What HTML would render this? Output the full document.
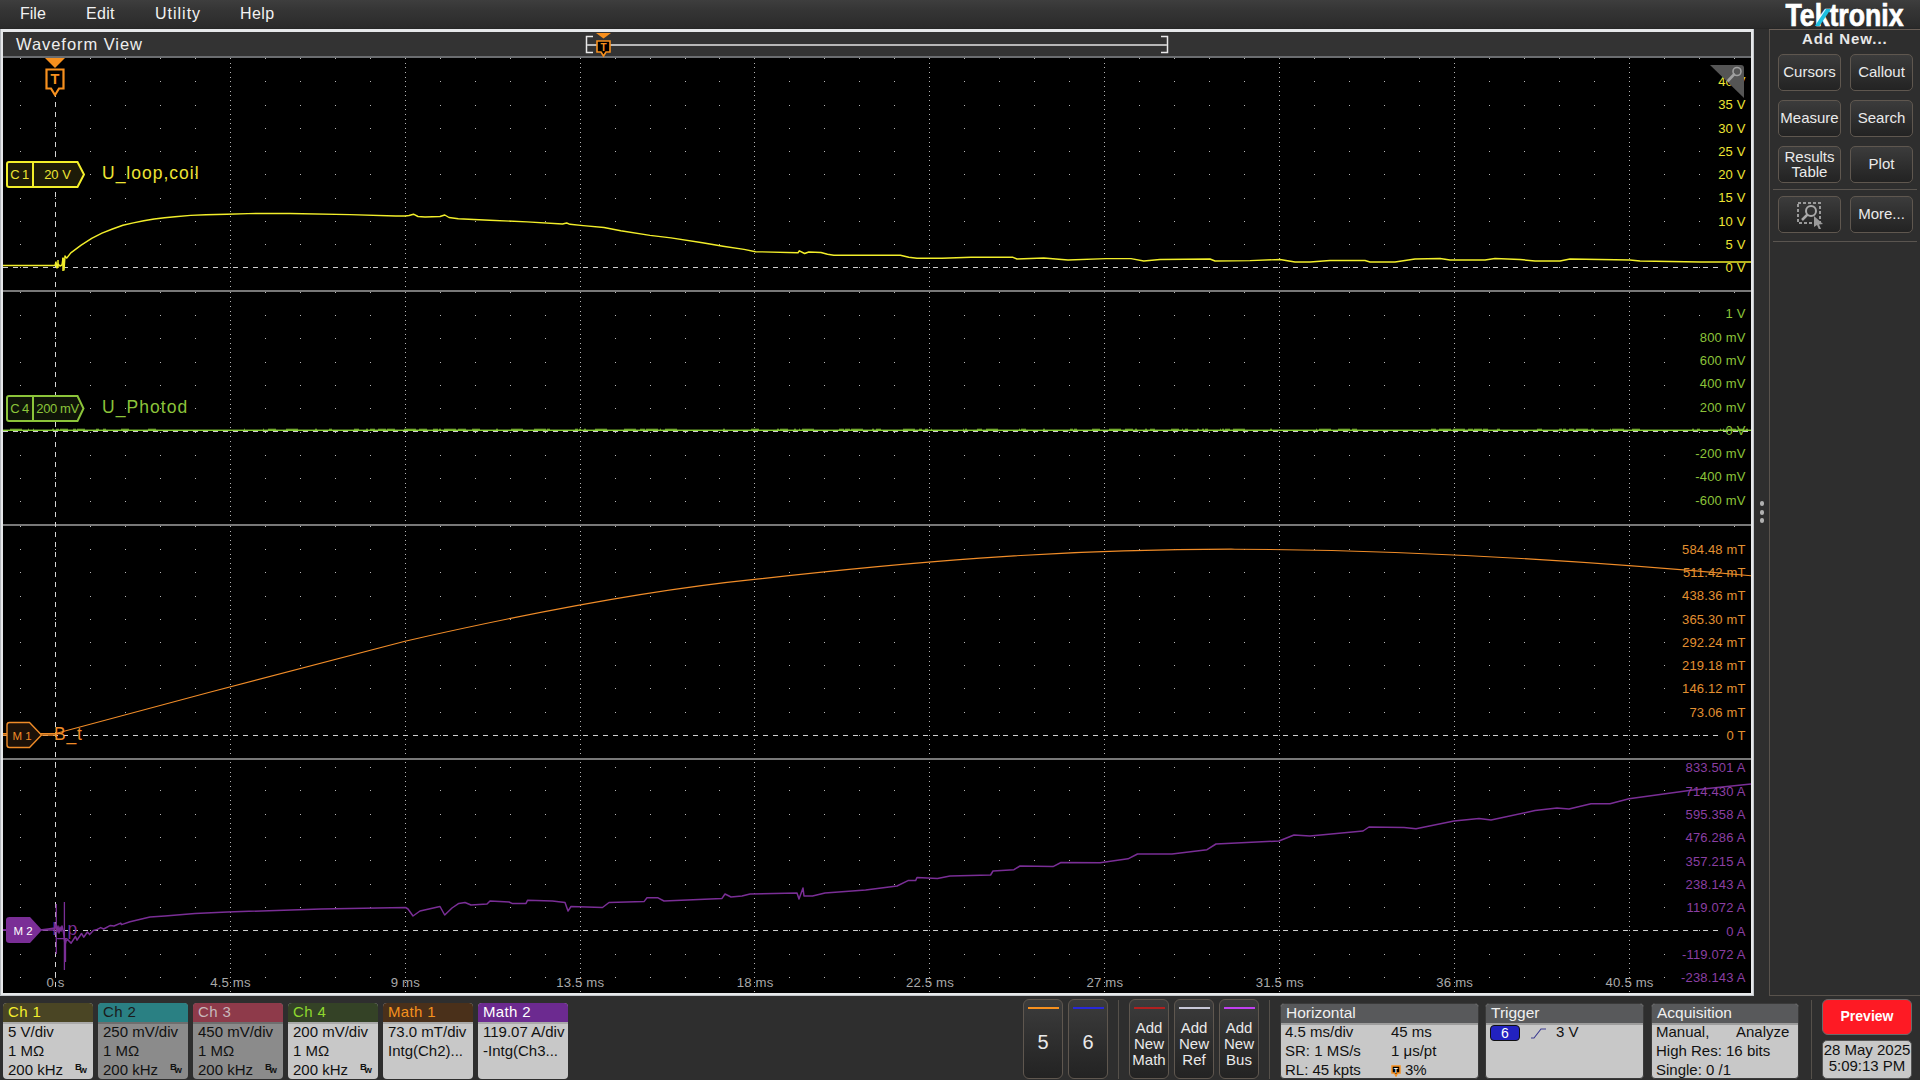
<!DOCTYPE html><html><head><meta charset="utf-8"><title>Tektronix</title><style>
html,body{margin:0;padding:0}
body{width:1920px;height:1080px;background:#2e2e2e;position:relative;overflow:hidden;font-family:"Liberation Sans",sans-serif;color:#eee}
.a{position:absolute}
.t{position:absolute;white-space:nowrap;line-height:1}
svg text{font-family:"Liberation Sans",sans-serif}
.btn{position:absolute;box-sizing:border-box;border:1px solid #5f574f;border-radius:5px;background:linear-gradient(#3c3c3c,#2a2a2a 70%,#232323);color:#eaeaea;text-align:center}
.box{position:absolute;box-sizing:border-box;border-radius:4px;overflow:hidden;background:#c8c8c8}
.box .h{position:absolute;left:0;top:0;right:0;height:18.5px;border-bottom:2px solid #a9a9a9}

</style></head><body>
<div class="a" style="left:0;top:0;width:1920px;height:29px;background:linear-gradient(#3e3e3e,#353535 35%,#2f2f2f 70%,#2a2a2a 96%,#242424)"></div>
<div class="t" style="left:20px;top:6px;font-size:16px;letter-spacing:0px;color:#f2f2f2">File</div>
<div class="t" style="left:86px;top:6px;font-size:16px;letter-spacing:0.3px;color:#f2f2f2">Edit</div>
<div class="t" style="left:155px;top:6px;font-size:16px;letter-spacing:1px;color:#f2f2f2">Utility</div>
<div class="t" style="left:240px;top:6px;font-size:16px;letter-spacing:0.4px;color:#f2f2f2">Help</div>
<div class="a" style="left:0;top:29px;width:1754px;height:967px;background:#e6e8ea"></div>
<div class="a" style="left:0;top:29px;width:1px;height:967px;background:#b4b8bc"></div>
<div class="a" style="left:1753px;top:29px;width:1px;height:967px;background:#c4c8cc"></div>
<div class="a" style="left:0;top:995px;width:1754px;height:1px;background:#c4c8cc"></div>
<div class="a" style="left:3px;top:32px;width:1748px;height:24px;background:#333333"></div>
<div class="a" style="left:3px;top:56px;width:1748px;height:2px;background:#6b6d70"></div>
<div class="t" style="left:16px;top:36px;font-size:16.5px;letter-spacing:0.95px;color:#eeeeee">Waveform View</div>
<div class="a" style="left:3px;top:58px;width:1748px;height:935px;background:#000"></div>
<svg class="a" style="left:0;top:0" width="1920" height="1080" viewBox="0 0 1920 1080">
<path d="M593 36.5H586.5V52.5H593" fill="none" stroke="#e8e8e8" stroke-width="1.5"/>
<path d="M1161 36.5H1167.5V52.5H1161" fill="none" stroke="#e8e8e8" stroke-width="1.5"/>
<rect x="587" y="44" width="580" height="2" fill="#b8b8b8"/>
<path d="M596 33H611L603.5 38.5Z" fill="#f7901e"/>
<path d="M597 41H610V52H606L603.5 56L601 52H597Z" fill="#000" stroke="#f7901e" stroke-width="1.6"/>
<text x="603.5" y="51" font-size="10" font-weight="bold" fill="#f7901e" text-anchor="middle">T</text>
<rect x="3" y="290" width="1748" height="2" fill="#787878"/>
<rect x="3" y="524" width="1748" height="2" fill="#787878"/>
<rect x="3" y="758" width="1748" height="2" fill="#787878"/>
<path d="M20 58h1v1h-1zM20 81h1v1h-1zM20 105h1v1h-1zM20 128h1v1h-1zM20 151h1v1h-1zM20 174h1v1h-1zM20 198h1v1h-1zM20 221h1v1h-1zM20 244h1v1h-1zM20 267h1v1h-1zM20 292h1v1h-1zM20 315h1v1h-1zM20 338h1v1h-1zM20 362h1v1h-1zM20 385h1v1h-1zM20 408h1v1h-1zM20 432h1v1h-1zM20 455h1v1h-1zM20 478h1v1h-1zM20 501h1v1h-1zM20 526h1v1h-1zM20 549h1v1h-1zM20 572h1v1h-1zM20 596h1v1h-1zM20 619h1v1h-1zM20 642h1v1h-1zM20 665h1v1h-1zM20 688h1v1h-1zM20 712h1v1h-1zM20 735h1v1h-1zM20 767h1v1h-1zM20 790h1v1h-1zM20 814h1v1h-1zM20 837h1v1h-1zM20 860h1v1h-1zM20 884h1v1h-1zM20 907h1v1h-1zM20 930h1v1h-1zM20 954h1v1h-1zM20 977h1v1h-1zM55 58h1v1h-1zM55 81h1v1h-1zM55 105h1v1h-1zM55 128h1v1h-1zM55 151h1v1h-1zM55 174h1v1h-1zM55 198h1v1h-1zM55 221h1v1h-1zM55 244h1v1h-1zM55 267h1v1h-1zM55 292h1v1h-1zM55 315h1v1h-1zM55 338h1v1h-1zM55 362h1v1h-1zM55 385h1v1h-1zM55 408h1v1h-1zM55 432h1v1h-1zM55 455h1v1h-1zM55 478h1v1h-1zM55 501h1v1h-1zM55 526h1v1h-1zM55 549h1v1h-1zM55 572h1v1h-1zM55 596h1v1h-1zM55 619h1v1h-1zM55 642h1v1h-1zM55 665h1v1h-1zM55 688h1v1h-1zM55 712h1v1h-1zM55 735h1v1h-1zM55 767h1v1h-1zM55 790h1v1h-1zM55 814h1v1h-1zM55 837h1v1h-1zM55 860h1v1h-1zM55 884h1v1h-1zM55 907h1v1h-1zM55 930h1v1h-1zM55 954h1v1h-1zM55 977h1v1h-1zM90 58h1v1h-1zM90 81h1v1h-1zM90 105h1v1h-1zM90 128h1v1h-1zM90 151h1v1h-1zM90 174h1v1h-1zM90 198h1v1h-1zM90 221h1v1h-1zM90 244h1v1h-1zM90 267h1v1h-1zM90 292h1v1h-1zM90 315h1v1h-1zM90 338h1v1h-1zM90 362h1v1h-1zM90 385h1v1h-1zM90 408h1v1h-1zM90 432h1v1h-1zM90 455h1v1h-1zM90 478h1v1h-1zM90 501h1v1h-1zM90 526h1v1h-1zM90 549h1v1h-1zM90 572h1v1h-1zM90 596h1v1h-1zM90 619h1v1h-1zM90 642h1v1h-1zM90 665h1v1h-1zM90 688h1v1h-1zM90 712h1v1h-1zM90 735h1v1h-1zM90 767h1v1h-1zM90 790h1v1h-1zM90 814h1v1h-1zM90 837h1v1h-1zM90 860h1v1h-1zM90 884h1v1h-1zM90 907h1v1h-1zM90 930h1v1h-1zM90 954h1v1h-1zM90 977h1v1h-1zM125 58h1v1h-1zM125 81h1v1h-1zM125 105h1v1h-1zM125 128h1v1h-1zM125 151h1v1h-1zM125 174h1v1h-1zM125 198h1v1h-1zM125 221h1v1h-1zM125 244h1v1h-1zM125 267h1v1h-1zM125 292h1v1h-1zM125 315h1v1h-1zM125 338h1v1h-1zM125 362h1v1h-1zM125 385h1v1h-1zM125 408h1v1h-1zM125 432h1v1h-1zM125 455h1v1h-1zM125 478h1v1h-1zM125 501h1v1h-1zM125 526h1v1h-1zM125 549h1v1h-1zM125 572h1v1h-1zM125 596h1v1h-1zM125 619h1v1h-1zM125 642h1v1h-1zM125 665h1v1h-1zM125 688h1v1h-1zM125 712h1v1h-1zM125 735h1v1h-1zM125 767h1v1h-1zM125 790h1v1h-1zM125 814h1v1h-1zM125 837h1v1h-1zM125 860h1v1h-1zM125 884h1v1h-1zM125 907h1v1h-1zM125 930h1v1h-1zM125 954h1v1h-1zM125 977h1v1h-1zM160 58h1v1h-1zM160 81h1v1h-1zM160 105h1v1h-1zM160 128h1v1h-1zM160 151h1v1h-1zM160 174h1v1h-1zM160 198h1v1h-1zM160 221h1v1h-1zM160 244h1v1h-1zM160 267h1v1h-1zM160 292h1v1h-1zM160 315h1v1h-1zM160 338h1v1h-1zM160 362h1v1h-1zM160 385h1v1h-1zM160 408h1v1h-1zM160 432h1v1h-1zM160 455h1v1h-1zM160 478h1v1h-1zM160 501h1v1h-1zM160 526h1v1h-1zM160 549h1v1h-1zM160 572h1v1h-1zM160 596h1v1h-1zM160 619h1v1h-1zM160 642h1v1h-1zM160 665h1v1h-1zM160 688h1v1h-1zM160 712h1v1h-1zM160 735h1v1h-1zM160 767h1v1h-1zM160 790h1v1h-1zM160 814h1v1h-1zM160 837h1v1h-1zM160 860h1v1h-1zM160 884h1v1h-1zM160 907h1v1h-1zM160 930h1v1h-1zM160 954h1v1h-1zM160 977h1v1h-1zM195 58h1v1h-1zM195 81h1v1h-1zM195 105h1v1h-1zM195 128h1v1h-1zM195 151h1v1h-1zM195 174h1v1h-1zM195 198h1v1h-1zM195 221h1v1h-1zM195 244h1v1h-1zM195 267h1v1h-1zM195 292h1v1h-1zM195 315h1v1h-1zM195 338h1v1h-1zM195 362h1v1h-1zM195 385h1v1h-1zM195 408h1v1h-1zM195 432h1v1h-1zM195 455h1v1h-1zM195 478h1v1h-1zM195 501h1v1h-1zM195 526h1v1h-1zM195 549h1v1h-1zM195 572h1v1h-1zM195 596h1v1h-1zM195 619h1v1h-1zM195 642h1v1h-1zM195 665h1v1h-1zM195 688h1v1h-1zM195 712h1v1h-1zM195 735h1v1h-1zM195 767h1v1h-1zM195 790h1v1h-1zM195 814h1v1h-1zM195 837h1v1h-1zM195 860h1v1h-1zM195 884h1v1h-1zM195 907h1v1h-1zM195 930h1v1h-1zM195 954h1v1h-1zM195 977h1v1h-1zM230 58h1v1h-1zM230 63h1v1h-1zM230 67h1v1h-1zM230 72h1v1h-1zM230 77h1v1h-1zM230 81h1v1h-1zM230 86h1v1h-1zM230 91h1v1h-1zM230 95h1v1h-1zM230 100h1v1h-1zM230 105h1v1h-1zM230 109h1v1h-1zM230 114h1v1h-1zM230 119h1v1h-1zM230 123h1v1h-1zM230 128h1v1h-1zM230 132h1v1h-1zM230 137h1v1h-1zM230 142h1v1h-1zM230 146h1v1h-1zM230 151h1v1h-1zM230 156h1v1h-1zM230 160h1v1h-1zM230 165h1v1h-1zM230 170h1v1h-1zM230 174h1v1h-1zM230 179h1v1h-1zM230 184h1v1h-1zM230 188h1v1h-1zM230 193h1v1h-1zM230 198h1v1h-1zM230 202h1v1h-1zM230 207h1v1h-1zM230 211h1v1h-1zM230 216h1v1h-1zM230 221h1v1h-1zM230 225h1v1h-1zM230 230h1v1h-1zM230 235h1v1h-1zM230 239h1v1h-1zM230 244h1v1h-1zM230 249h1v1h-1zM230 253h1v1h-1zM230 258h1v1h-1zM230 263h1v1h-1zM230 267h1v1h-1zM230 272h1v1h-1zM230 277h1v1h-1zM230 281h1v1h-1zM230 286h1v1h-1zM230 292h1v1h-1zM230 297h1v1h-1zM230 301h1v1h-1zM230 306h1v1h-1zM230 311h1v1h-1zM230 315h1v1h-1zM230 320h1v1h-1zM230 324h1v1h-1zM230 329h1v1h-1zM230 334h1v1h-1zM230 338h1v1h-1zM230 343h1v1h-1zM230 348h1v1h-1zM230 352h1v1h-1zM230 357h1v1h-1zM230 362h1v1h-1zM230 366h1v1h-1zM230 371h1v1h-1zM230 376h1v1h-1zM230 380h1v1h-1zM230 385h1v1h-1zM230 390h1v1h-1zM230 394h1v1h-1zM230 399h1v1h-1zM230 404h1v1h-1zM230 408h1v1h-1zM230 413h1v1h-1zM230 418h1v1h-1zM230 422h1v1h-1zM230 427h1v1h-1zM230 432h1v1h-1zM230 436h1v1h-1zM230 441h1v1h-1zM230 446h1v1h-1zM230 450h1v1h-1zM230 455h1v1h-1zM230 459h1v1h-1zM230 464h1v1h-1zM230 469h1v1h-1zM230 473h1v1h-1zM230 478h1v1h-1zM230 483h1v1h-1zM230 487h1v1h-1zM230 492h1v1h-1zM230 497h1v1h-1zM230 501h1v1h-1zM230 506h1v1h-1zM230 511h1v1h-1zM230 515h1v1h-1zM230 520h1v1h-1zM230 526h1v1h-1zM230 531h1v1h-1zM230 535h1v1h-1zM230 540h1v1h-1zM230 544h1v1h-1zM230 549h1v1h-1zM230 554h1v1h-1zM230 558h1v1h-1zM230 563h1v1h-1zM230 568h1v1h-1zM230 572h1v1h-1zM230 577h1v1h-1zM230 582h1v1h-1zM230 586h1v1h-1zM230 591h1v1h-1zM230 596h1v1h-1zM230 600h1v1h-1zM230 605h1v1h-1zM230 609h1v1h-1zM230 614h1v1h-1zM230 619h1v1h-1zM230 623h1v1h-1zM230 628h1v1h-1zM230 633h1v1h-1zM230 637h1v1h-1zM230 642h1v1h-1zM230 647h1v1h-1zM230 651h1v1h-1zM230 656h1v1h-1zM230 661h1v1h-1zM230 665h1v1h-1zM230 670h1v1h-1zM230 674h1v1h-1zM230 679h1v1h-1zM230 684h1v1h-1zM230 688h1v1h-1zM230 693h1v1h-1zM230 698h1v1h-1zM230 702h1v1h-1zM230 707h1v1h-1zM230 712h1v1h-1zM230 716h1v1h-1zM230 721h1v1h-1zM230 726h1v1h-1zM230 730h1v1h-1zM230 735h1v1h-1zM230 739h1v1h-1zM230 744h1v1h-1zM230 749h1v1h-1zM230 753h1v1h-1zM230 762h1v1h-1zM230 767h1v1h-1zM230 772h1v1h-1zM230 776h1v1h-1zM230 781h1v1h-1zM230 786h1v1h-1zM230 790h1v1h-1zM230 795h1v1h-1zM230 800h1v1h-1zM230 804h1v1h-1zM230 809h1v1h-1zM230 814h1v1h-1zM230 818h1v1h-1zM230 823h1v1h-1zM230 828h1v1h-1zM230 832h1v1h-1zM230 837h1v1h-1zM230 842h1v1h-1zM230 846h1v1h-1zM230 851h1v1h-1zM230 856h1v1h-1zM230 860h1v1h-1zM230 865h1v1h-1zM230 870h1v1h-1zM230 874h1v1h-1zM230 879h1v1h-1zM230 884h1v1h-1zM230 888h1v1h-1zM230 893h1v1h-1zM230 898h1v1h-1zM230 902h1v1h-1zM230 907h1v1h-1zM230 912h1v1h-1zM230 916h1v1h-1zM230 921h1v1h-1zM230 926h1v1h-1zM230 930h1v1h-1zM230 935h1v1h-1zM230 940h1v1h-1zM230 944h1v1h-1zM230 949h1v1h-1zM230 954h1v1h-1zM230 958h1v1h-1zM230 963h1v1h-1zM230 968h1v1h-1zM230 972h1v1h-1zM230 977h1v1h-1zM230 982h1v1h-1zM230 986h1v1h-1zM230 991h1v1h-1zM265 58h1v1h-1zM265 81h1v1h-1zM265 105h1v1h-1zM265 128h1v1h-1zM265 151h1v1h-1zM265 174h1v1h-1zM265 198h1v1h-1zM265 221h1v1h-1zM265 244h1v1h-1zM265 267h1v1h-1zM265 292h1v1h-1zM265 315h1v1h-1zM265 338h1v1h-1zM265 362h1v1h-1zM265 385h1v1h-1zM265 408h1v1h-1zM265 432h1v1h-1zM265 455h1v1h-1zM265 478h1v1h-1zM265 501h1v1h-1zM265 526h1v1h-1zM265 549h1v1h-1zM265 572h1v1h-1zM265 596h1v1h-1zM265 619h1v1h-1zM265 642h1v1h-1zM265 665h1v1h-1zM265 688h1v1h-1zM265 712h1v1h-1zM265 735h1v1h-1zM265 767h1v1h-1zM265 790h1v1h-1zM265 814h1v1h-1zM265 837h1v1h-1zM265 860h1v1h-1zM265 884h1v1h-1zM265 907h1v1h-1zM265 930h1v1h-1zM265 954h1v1h-1zM265 977h1v1h-1zM300 58h1v1h-1zM300 81h1v1h-1zM300 105h1v1h-1zM300 128h1v1h-1zM300 151h1v1h-1zM300 174h1v1h-1zM300 198h1v1h-1zM300 221h1v1h-1zM300 244h1v1h-1zM300 267h1v1h-1zM300 292h1v1h-1zM300 315h1v1h-1zM300 338h1v1h-1zM300 362h1v1h-1zM300 385h1v1h-1zM300 408h1v1h-1zM300 432h1v1h-1zM300 455h1v1h-1zM300 478h1v1h-1zM300 501h1v1h-1zM300 526h1v1h-1zM300 549h1v1h-1zM300 572h1v1h-1zM300 596h1v1h-1zM300 619h1v1h-1zM300 642h1v1h-1zM300 665h1v1h-1zM300 688h1v1h-1zM300 712h1v1h-1zM300 735h1v1h-1zM300 767h1v1h-1zM300 790h1v1h-1zM300 814h1v1h-1zM300 837h1v1h-1zM300 860h1v1h-1zM300 884h1v1h-1zM300 907h1v1h-1zM300 930h1v1h-1zM300 954h1v1h-1zM300 977h1v1h-1zM335 58h1v1h-1zM335 81h1v1h-1zM335 105h1v1h-1zM335 128h1v1h-1zM335 151h1v1h-1zM335 174h1v1h-1zM335 198h1v1h-1zM335 221h1v1h-1zM335 244h1v1h-1zM335 267h1v1h-1zM335 292h1v1h-1zM335 315h1v1h-1zM335 338h1v1h-1zM335 362h1v1h-1zM335 385h1v1h-1zM335 408h1v1h-1zM335 432h1v1h-1zM335 455h1v1h-1zM335 478h1v1h-1zM335 501h1v1h-1zM335 526h1v1h-1zM335 549h1v1h-1zM335 572h1v1h-1zM335 596h1v1h-1zM335 619h1v1h-1zM335 642h1v1h-1zM335 665h1v1h-1zM335 688h1v1h-1zM335 712h1v1h-1zM335 735h1v1h-1zM335 767h1v1h-1zM335 790h1v1h-1zM335 814h1v1h-1zM335 837h1v1h-1zM335 860h1v1h-1zM335 884h1v1h-1zM335 907h1v1h-1zM335 930h1v1h-1zM335 954h1v1h-1zM335 977h1v1h-1zM370 58h1v1h-1zM370 81h1v1h-1zM370 105h1v1h-1zM370 128h1v1h-1zM370 151h1v1h-1zM370 174h1v1h-1zM370 198h1v1h-1zM370 221h1v1h-1zM370 244h1v1h-1zM370 267h1v1h-1zM370 292h1v1h-1zM370 315h1v1h-1zM370 338h1v1h-1zM370 362h1v1h-1zM370 385h1v1h-1zM370 408h1v1h-1zM370 432h1v1h-1zM370 455h1v1h-1zM370 478h1v1h-1zM370 501h1v1h-1zM370 526h1v1h-1zM370 549h1v1h-1zM370 572h1v1h-1zM370 596h1v1h-1zM370 619h1v1h-1zM370 642h1v1h-1zM370 665h1v1h-1zM370 688h1v1h-1zM370 712h1v1h-1zM370 735h1v1h-1zM370 767h1v1h-1zM370 790h1v1h-1zM370 814h1v1h-1zM370 837h1v1h-1zM370 860h1v1h-1zM370 884h1v1h-1zM370 907h1v1h-1zM370 930h1v1h-1zM370 954h1v1h-1zM370 977h1v1h-1zM405 58h1v1h-1zM405 63h1v1h-1zM405 67h1v1h-1zM405 72h1v1h-1zM405 77h1v1h-1zM405 81h1v1h-1zM405 86h1v1h-1zM405 91h1v1h-1zM405 95h1v1h-1zM405 100h1v1h-1zM405 105h1v1h-1zM405 109h1v1h-1zM405 114h1v1h-1zM405 119h1v1h-1zM405 123h1v1h-1zM405 128h1v1h-1zM405 132h1v1h-1zM405 137h1v1h-1zM405 142h1v1h-1zM405 146h1v1h-1zM405 151h1v1h-1zM405 156h1v1h-1zM405 160h1v1h-1zM405 165h1v1h-1zM405 170h1v1h-1zM405 174h1v1h-1zM405 179h1v1h-1zM405 184h1v1h-1zM405 188h1v1h-1zM405 193h1v1h-1zM405 198h1v1h-1zM405 202h1v1h-1zM405 207h1v1h-1zM405 211h1v1h-1zM405 216h1v1h-1zM405 221h1v1h-1zM405 225h1v1h-1zM405 230h1v1h-1zM405 235h1v1h-1zM405 239h1v1h-1zM405 244h1v1h-1zM405 249h1v1h-1zM405 253h1v1h-1zM405 258h1v1h-1zM405 263h1v1h-1zM405 267h1v1h-1zM405 272h1v1h-1zM405 277h1v1h-1zM405 281h1v1h-1zM405 286h1v1h-1zM405 292h1v1h-1zM405 297h1v1h-1zM405 301h1v1h-1zM405 306h1v1h-1zM405 311h1v1h-1zM405 315h1v1h-1zM405 320h1v1h-1zM405 324h1v1h-1zM405 329h1v1h-1zM405 334h1v1h-1zM405 338h1v1h-1zM405 343h1v1h-1zM405 348h1v1h-1zM405 352h1v1h-1zM405 357h1v1h-1zM405 362h1v1h-1zM405 366h1v1h-1zM405 371h1v1h-1zM405 376h1v1h-1zM405 380h1v1h-1zM405 385h1v1h-1zM405 390h1v1h-1zM405 394h1v1h-1zM405 399h1v1h-1zM405 404h1v1h-1zM405 408h1v1h-1zM405 413h1v1h-1zM405 418h1v1h-1zM405 422h1v1h-1zM405 427h1v1h-1zM405 432h1v1h-1zM405 436h1v1h-1zM405 441h1v1h-1zM405 446h1v1h-1zM405 450h1v1h-1zM405 455h1v1h-1zM405 459h1v1h-1zM405 464h1v1h-1zM405 469h1v1h-1zM405 473h1v1h-1zM405 478h1v1h-1zM405 483h1v1h-1zM405 487h1v1h-1zM405 492h1v1h-1zM405 497h1v1h-1zM405 501h1v1h-1zM405 506h1v1h-1zM405 511h1v1h-1zM405 515h1v1h-1zM405 520h1v1h-1zM405 526h1v1h-1zM405 531h1v1h-1zM405 535h1v1h-1zM405 540h1v1h-1zM405 544h1v1h-1zM405 549h1v1h-1zM405 554h1v1h-1zM405 558h1v1h-1zM405 563h1v1h-1zM405 568h1v1h-1zM405 572h1v1h-1zM405 577h1v1h-1zM405 582h1v1h-1zM405 586h1v1h-1zM405 591h1v1h-1zM405 596h1v1h-1zM405 600h1v1h-1zM405 605h1v1h-1zM405 609h1v1h-1zM405 614h1v1h-1zM405 619h1v1h-1zM405 623h1v1h-1zM405 628h1v1h-1zM405 633h1v1h-1zM405 637h1v1h-1zM405 642h1v1h-1zM405 647h1v1h-1zM405 651h1v1h-1zM405 656h1v1h-1zM405 661h1v1h-1zM405 665h1v1h-1zM405 670h1v1h-1zM405 674h1v1h-1zM405 679h1v1h-1zM405 684h1v1h-1zM405 688h1v1h-1zM405 693h1v1h-1zM405 698h1v1h-1zM405 702h1v1h-1zM405 707h1v1h-1zM405 712h1v1h-1zM405 716h1v1h-1zM405 721h1v1h-1zM405 726h1v1h-1zM405 730h1v1h-1zM405 735h1v1h-1zM405 739h1v1h-1zM405 744h1v1h-1zM405 749h1v1h-1zM405 753h1v1h-1zM405 762h1v1h-1zM405 767h1v1h-1zM405 772h1v1h-1zM405 776h1v1h-1zM405 781h1v1h-1zM405 786h1v1h-1zM405 790h1v1h-1zM405 795h1v1h-1zM405 800h1v1h-1zM405 804h1v1h-1zM405 809h1v1h-1zM405 814h1v1h-1zM405 818h1v1h-1zM405 823h1v1h-1zM405 828h1v1h-1zM405 832h1v1h-1zM405 837h1v1h-1zM405 842h1v1h-1zM405 846h1v1h-1zM405 851h1v1h-1zM405 856h1v1h-1zM405 860h1v1h-1zM405 865h1v1h-1zM405 870h1v1h-1zM405 874h1v1h-1zM405 879h1v1h-1zM405 884h1v1h-1zM405 888h1v1h-1zM405 893h1v1h-1zM405 898h1v1h-1zM405 902h1v1h-1zM405 907h1v1h-1zM405 912h1v1h-1zM405 916h1v1h-1zM405 921h1v1h-1zM405 926h1v1h-1zM405 930h1v1h-1zM405 935h1v1h-1zM405 940h1v1h-1zM405 944h1v1h-1zM405 949h1v1h-1zM405 954h1v1h-1zM405 958h1v1h-1zM405 963h1v1h-1zM405 968h1v1h-1zM405 972h1v1h-1zM405 977h1v1h-1zM405 982h1v1h-1zM405 986h1v1h-1zM405 991h1v1h-1zM440 58h1v1h-1zM440 81h1v1h-1zM440 105h1v1h-1zM440 128h1v1h-1zM440 151h1v1h-1zM440 174h1v1h-1zM440 198h1v1h-1zM440 221h1v1h-1zM440 244h1v1h-1zM440 267h1v1h-1zM440 292h1v1h-1zM440 315h1v1h-1zM440 338h1v1h-1zM440 362h1v1h-1zM440 385h1v1h-1zM440 408h1v1h-1zM440 432h1v1h-1zM440 455h1v1h-1zM440 478h1v1h-1zM440 501h1v1h-1zM440 526h1v1h-1zM440 549h1v1h-1zM440 572h1v1h-1zM440 596h1v1h-1zM440 619h1v1h-1zM440 642h1v1h-1zM440 665h1v1h-1zM440 688h1v1h-1zM440 712h1v1h-1zM440 735h1v1h-1zM440 767h1v1h-1zM440 790h1v1h-1zM440 814h1v1h-1zM440 837h1v1h-1zM440 860h1v1h-1zM440 884h1v1h-1zM440 907h1v1h-1zM440 930h1v1h-1zM440 954h1v1h-1zM440 977h1v1h-1zM475 58h1v1h-1zM475 81h1v1h-1zM475 105h1v1h-1zM475 128h1v1h-1zM475 151h1v1h-1zM475 174h1v1h-1zM475 198h1v1h-1zM475 221h1v1h-1zM475 244h1v1h-1zM475 267h1v1h-1zM475 292h1v1h-1zM475 315h1v1h-1zM475 338h1v1h-1zM475 362h1v1h-1zM475 385h1v1h-1zM475 408h1v1h-1zM475 432h1v1h-1zM475 455h1v1h-1zM475 478h1v1h-1zM475 501h1v1h-1zM475 526h1v1h-1zM475 549h1v1h-1zM475 572h1v1h-1zM475 596h1v1h-1zM475 619h1v1h-1zM475 642h1v1h-1zM475 665h1v1h-1zM475 688h1v1h-1zM475 712h1v1h-1zM475 735h1v1h-1zM475 767h1v1h-1zM475 790h1v1h-1zM475 814h1v1h-1zM475 837h1v1h-1zM475 860h1v1h-1zM475 884h1v1h-1zM475 907h1v1h-1zM475 930h1v1h-1zM475 954h1v1h-1zM475 977h1v1h-1zM510 58h1v1h-1zM510 81h1v1h-1zM510 105h1v1h-1zM510 128h1v1h-1zM510 151h1v1h-1zM510 174h1v1h-1zM510 198h1v1h-1zM510 221h1v1h-1zM510 244h1v1h-1zM510 267h1v1h-1zM510 292h1v1h-1zM510 315h1v1h-1zM510 338h1v1h-1zM510 362h1v1h-1zM510 385h1v1h-1zM510 408h1v1h-1zM510 432h1v1h-1zM510 455h1v1h-1zM510 478h1v1h-1zM510 501h1v1h-1zM510 526h1v1h-1zM510 549h1v1h-1zM510 572h1v1h-1zM510 596h1v1h-1zM510 619h1v1h-1zM510 642h1v1h-1zM510 665h1v1h-1zM510 688h1v1h-1zM510 712h1v1h-1zM510 735h1v1h-1zM510 767h1v1h-1zM510 790h1v1h-1zM510 814h1v1h-1zM510 837h1v1h-1zM510 860h1v1h-1zM510 884h1v1h-1zM510 907h1v1h-1zM510 930h1v1h-1zM510 954h1v1h-1zM510 977h1v1h-1zM545 58h1v1h-1zM545 81h1v1h-1zM545 105h1v1h-1zM545 128h1v1h-1zM545 151h1v1h-1zM545 174h1v1h-1zM545 198h1v1h-1zM545 221h1v1h-1zM545 244h1v1h-1zM545 267h1v1h-1zM545 292h1v1h-1zM545 315h1v1h-1zM545 338h1v1h-1zM545 362h1v1h-1zM545 385h1v1h-1zM545 408h1v1h-1zM545 432h1v1h-1zM545 455h1v1h-1zM545 478h1v1h-1zM545 501h1v1h-1zM545 526h1v1h-1zM545 549h1v1h-1zM545 572h1v1h-1zM545 596h1v1h-1zM545 619h1v1h-1zM545 642h1v1h-1zM545 665h1v1h-1zM545 688h1v1h-1zM545 712h1v1h-1zM545 735h1v1h-1zM545 767h1v1h-1zM545 790h1v1h-1zM545 814h1v1h-1zM545 837h1v1h-1zM545 860h1v1h-1zM545 884h1v1h-1zM545 907h1v1h-1zM545 930h1v1h-1zM545 954h1v1h-1zM545 977h1v1h-1zM580 58h1v1h-1zM580 63h1v1h-1zM580 67h1v1h-1zM580 72h1v1h-1zM580 77h1v1h-1zM580 81h1v1h-1zM580 86h1v1h-1zM580 91h1v1h-1zM580 95h1v1h-1zM580 100h1v1h-1zM580 105h1v1h-1zM580 109h1v1h-1zM580 114h1v1h-1zM580 119h1v1h-1zM580 123h1v1h-1zM580 128h1v1h-1zM580 132h1v1h-1zM580 137h1v1h-1zM580 142h1v1h-1zM580 146h1v1h-1zM580 151h1v1h-1zM580 156h1v1h-1zM580 160h1v1h-1zM580 165h1v1h-1zM580 170h1v1h-1zM580 174h1v1h-1zM580 179h1v1h-1zM580 184h1v1h-1zM580 188h1v1h-1zM580 193h1v1h-1zM580 198h1v1h-1zM580 202h1v1h-1zM580 207h1v1h-1zM580 211h1v1h-1zM580 216h1v1h-1zM580 221h1v1h-1zM580 225h1v1h-1zM580 230h1v1h-1zM580 235h1v1h-1zM580 239h1v1h-1zM580 244h1v1h-1zM580 249h1v1h-1zM580 253h1v1h-1zM580 258h1v1h-1zM580 263h1v1h-1zM580 267h1v1h-1zM580 272h1v1h-1zM580 277h1v1h-1zM580 281h1v1h-1zM580 286h1v1h-1zM580 292h1v1h-1zM580 297h1v1h-1zM580 301h1v1h-1zM580 306h1v1h-1zM580 311h1v1h-1zM580 315h1v1h-1zM580 320h1v1h-1zM580 324h1v1h-1zM580 329h1v1h-1zM580 334h1v1h-1zM580 338h1v1h-1zM580 343h1v1h-1zM580 348h1v1h-1zM580 352h1v1h-1zM580 357h1v1h-1zM580 362h1v1h-1zM580 366h1v1h-1zM580 371h1v1h-1zM580 376h1v1h-1zM580 380h1v1h-1zM580 385h1v1h-1zM580 390h1v1h-1zM580 394h1v1h-1zM580 399h1v1h-1zM580 404h1v1h-1zM580 408h1v1h-1zM580 413h1v1h-1zM580 418h1v1h-1zM580 422h1v1h-1zM580 427h1v1h-1zM580 432h1v1h-1zM580 436h1v1h-1zM580 441h1v1h-1zM580 446h1v1h-1zM580 450h1v1h-1zM580 455h1v1h-1zM580 459h1v1h-1zM580 464h1v1h-1zM580 469h1v1h-1zM580 473h1v1h-1zM580 478h1v1h-1zM580 483h1v1h-1zM580 487h1v1h-1zM580 492h1v1h-1zM580 497h1v1h-1zM580 501h1v1h-1zM580 506h1v1h-1zM580 511h1v1h-1zM580 515h1v1h-1zM580 520h1v1h-1zM580 526h1v1h-1zM580 531h1v1h-1zM580 535h1v1h-1zM580 540h1v1h-1zM580 544h1v1h-1zM580 549h1v1h-1zM580 554h1v1h-1zM580 558h1v1h-1zM580 563h1v1h-1zM580 568h1v1h-1zM580 572h1v1h-1zM580 577h1v1h-1zM580 582h1v1h-1zM580 586h1v1h-1zM580 591h1v1h-1zM580 596h1v1h-1zM580 600h1v1h-1zM580 605h1v1h-1zM580 609h1v1h-1zM580 614h1v1h-1zM580 619h1v1h-1zM580 623h1v1h-1zM580 628h1v1h-1zM580 633h1v1h-1zM580 637h1v1h-1zM580 642h1v1h-1zM580 647h1v1h-1zM580 651h1v1h-1zM580 656h1v1h-1zM580 661h1v1h-1zM580 665h1v1h-1zM580 670h1v1h-1zM580 674h1v1h-1zM580 679h1v1h-1zM580 684h1v1h-1zM580 688h1v1h-1zM580 693h1v1h-1zM580 698h1v1h-1zM580 702h1v1h-1zM580 707h1v1h-1zM580 712h1v1h-1zM580 716h1v1h-1zM580 721h1v1h-1zM580 726h1v1h-1zM580 730h1v1h-1zM580 735h1v1h-1zM580 739h1v1h-1zM580 744h1v1h-1zM580 749h1v1h-1zM580 753h1v1h-1zM580 762h1v1h-1zM580 767h1v1h-1zM580 772h1v1h-1zM580 776h1v1h-1zM580 781h1v1h-1zM580 786h1v1h-1zM580 790h1v1h-1zM580 795h1v1h-1zM580 800h1v1h-1zM580 804h1v1h-1zM580 809h1v1h-1zM580 814h1v1h-1zM580 818h1v1h-1zM580 823h1v1h-1zM580 828h1v1h-1zM580 832h1v1h-1zM580 837h1v1h-1zM580 842h1v1h-1zM580 846h1v1h-1zM580 851h1v1h-1zM580 856h1v1h-1zM580 860h1v1h-1zM580 865h1v1h-1zM580 870h1v1h-1zM580 874h1v1h-1zM580 879h1v1h-1zM580 884h1v1h-1zM580 888h1v1h-1zM580 893h1v1h-1zM580 898h1v1h-1zM580 902h1v1h-1zM580 907h1v1h-1zM580 912h1v1h-1zM580 916h1v1h-1zM580 921h1v1h-1zM580 926h1v1h-1zM580 930h1v1h-1zM580 935h1v1h-1zM580 940h1v1h-1zM580 944h1v1h-1zM580 949h1v1h-1zM580 954h1v1h-1zM580 958h1v1h-1zM580 963h1v1h-1zM580 968h1v1h-1zM580 972h1v1h-1zM580 977h1v1h-1zM580 982h1v1h-1zM580 986h1v1h-1zM580 991h1v1h-1zM615 58h1v1h-1zM615 81h1v1h-1zM615 105h1v1h-1zM615 128h1v1h-1zM615 151h1v1h-1zM615 174h1v1h-1zM615 198h1v1h-1zM615 221h1v1h-1zM615 244h1v1h-1zM615 267h1v1h-1zM615 292h1v1h-1zM615 315h1v1h-1zM615 338h1v1h-1zM615 362h1v1h-1zM615 385h1v1h-1zM615 408h1v1h-1zM615 432h1v1h-1zM615 455h1v1h-1zM615 478h1v1h-1zM615 501h1v1h-1zM615 526h1v1h-1zM615 549h1v1h-1zM615 572h1v1h-1zM615 596h1v1h-1zM615 619h1v1h-1zM615 642h1v1h-1zM615 665h1v1h-1zM615 688h1v1h-1zM615 712h1v1h-1zM615 735h1v1h-1zM615 767h1v1h-1zM615 790h1v1h-1zM615 814h1v1h-1zM615 837h1v1h-1zM615 860h1v1h-1zM615 884h1v1h-1zM615 907h1v1h-1zM615 930h1v1h-1zM615 954h1v1h-1zM615 977h1v1h-1zM650 58h1v1h-1zM650 81h1v1h-1zM650 105h1v1h-1zM650 128h1v1h-1zM650 151h1v1h-1zM650 174h1v1h-1zM650 198h1v1h-1zM650 221h1v1h-1zM650 244h1v1h-1zM650 267h1v1h-1zM650 292h1v1h-1zM650 315h1v1h-1zM650 338h1v1h-1zM650 362h1v1h-1zM650 385h1v1h-1zM650 408h1v1h-1zM650 432h1v1h-1zM650 455h1v1h-1zM650 478h1v1h-1zM650 501h1v1h-1zM650 526h1v1h-1zM650 549h1v1h-1zM650 572h1v1h-1zM650 596h1v1h-1zM650 619h1v1h-1zM650 642h1v1h-1zM650 665h1v1h-1zM650 688h1v1h-1zM650 712h1v1h-1zM650 735h1v1h-1zM650 767h1v1h-1zM650 790h1v1h-1zM650 814h1v1h-1zM650 837h1v1h-1zM650 860h1v1h-1zM650 884h1v1h-1zM650 907h1v1h-1zM650 930h1v1h-1zM650 954h1v1h-1zM650 977h1v1h-1zM685 58h1v1h-1zM685 81h1v1h-1zM685 105h1v1h-1zM685 128h1v1h-1zM685 151h1v1h-1zM685 174h1v1h-1zM685 198h1v1h-1zM685 221h1v1h-1zM685 244h1v1h-1zM685 267h1v1h-1zM685 292h1v1h-1zM685 315h1v1h-1zM685 338h1v1h-1zM685 362h1v1h-1zM685 385h1v1h-1zM685 408h1v1h-1zM685 432h1v1h-1zM685 455h1v1h-1zM685 478h1v1h-1zM685 501h1v1h-1zM685 526h1v1h-1zM685 549h1v1h-1zM685 572h1v1h-1zM685 596h1v1h-1zM685 619h1v1h-1zM685 642h1v1h-1zM685 665h1v1h-1zM685 688h1v1h-1zM685 712h1v1h-1zM685 735h1v1h-1zM685 767h1v1h-1zM685 790h1v1h-1zM685 814h1v1h-1zM685 837h1v1h-1zM685 860h1v1h-1zM685 884h1v1h-1zM685 907h1v1h-1zM685 930h1v1h-1zM685 954h1v1h-1zM685 977h1v1h-1zM719 58h1v1h-1zM719 81h1v1h-1zM719 105h1v1h-1zM719 128h1v1h-1zM719 151h1v1h-1zM719 174h1v1h-1zM719 198h1v1h-1zM719 221h1v1h-1zM719 244h1v1h-1zM719 267h1v1h-1zM719 292h1v1h-1zM719 315h1v1h-1zM719 338h1v1h-1zM719 362h1v1h-1zM719 385h1v1h-1zM719 408h1v1h-1zM719 432h1v1h-1zM719 455h1v1h-1zM719 478h1v1h-1zM719 501h1v1h-1zM719 526h1v1h-1zM719 549h1v1h-1zM719 572h1v1h-1zM719 596h1v1h-1zM719 619h1v1h-1zM719 642h1v1h-1zM719 665h1v1h-1zM719 688h1v1h-1zM719 712h1v1h-1zM719 735h1v1h-1zM719 767h1v1h-1zM719 790h1v1h-1zM719 814h1v1h-1zM719 837h1v1h-1zM719 860h1v1h-1zM719 884h1v1h-1zM719 907h1v1h-1zM719 930h1v1h-1zM719 954h1v1h-1zM719 977h1v1h-1zM754 58h1v1h-1zM754 63h1v1h-1zM754 67h1v1h-1zM754 72h1v1h-1zM754 77h1v1h-1zM754 81h1v1h-1zM754 86h1v1h-1zM754 91h1v1h-1zM754 95h1v1h-1zM754 100h1v1h-1zM754 105h1v1h-1zM754 109h1v1h-1zM754 114h1v1h-1zM754 119h1v1h-1zM754 123h1v1h-1zM754 128h1v1h-1zM754 132h1v1h-1zM754 137h1v1h-1zM754 142h1v1h-1zM754 146h1v1h-1zM754 151h1v1h-1zM754 156h1v1h-1zM754 160h1v1h-1zM754 165h1v1h-1zM754 170h1v1h-1zM754 174h1v1h-1zM754 179h1v1h-1zM754 184h1v1h-1zM754 188h1v1h-1zM754 193h1v1h-1zM754 198h1v1h-1zM754 202h1v1h-1zM754 207h1v1h-1zM754 211h1v1h-1zM754 216h1v1h-1zM754 221h1v1h-1zM754 225h1v1h-1zM754 230h1v1h-1zM754 235h1v1h-1zM754 239h1v1h-1zM754 244h1v1h-1zM754 249h1v1h-1zM754 253h1v1h-1zM754 258h1v1h-1zM754 263h1v1h-1zM754 267h1v1h-1zM754 272h1v1h-1zM754 277h1v1h-1zM754 281h1v1h-1zM754 286h1v1h-1zM754 292h1v1h-1zM754 297h1v1h-1zM754 301h1v1h-1zM754 306h1v1h-1zM754 311h1v1h-1zM754 315h1v1h-1zM754 320h1v1h-1zM754 324h1v1h-1zM754 329h1v1h-1zM754 334h1v1h-1zM754 338h1v1h-1zM754 343h1v1h-1zM754 348h1v1h-1zM754 352h1v1h-1zM754 357h1v1h-1zM754 362h1v1h-1zM754 366h1v1h-1zM754 371h1v1h-1zM754 376h1v1h-1zM754 380h1v1h-1zM754 385h1v1h-1zM754 390h1v1h-1zM754 394h1v1h-1zM754 399h1v1h-1zM754 404h1v1h-1zM754 408h1v1h-1zM754 413h1v1h-1zM754 418h1v1h-1zM754 422h1v1h-1zM754 427h1v1h-1zM754 432h1v1h-1zM754 436h1v1h-1zM754 441h1v1h-1zM754 446h1v1h-1zM754 450h1v1h-1zM754 455h1v1h-1zM754 459h1v1h-1zM754 464h1v1h-1zM754 469h1v1h-1zM754 473h1v1h-1zM754 478h1v1h-1zM754 483h1v1h-1zM754 487h1v1h-1zM754 492h1v1h-1zM754 497h1v1h-1zM754 501h1v1h-1zM754 506h1v1h-1zM754 511h1v1h-1zM754 515h1v1h-1zM754 520h1v1h-1zM754 526h1v1h-1zM754 531h1v1h-1zM754 535h1v1h-1zM754 540h1v1h-1zM754 544h1v1h-1zM754 549h1v1h-1zM754 554h1v1h-1zM754 558h1v1h-1zM754 563h1v1h-1zM754 568h1v1h-1zM754 572h1v1h-1zM754 577h1v1h-1zM754 582h1v1h-1zM754 586h1v1h-1zM754 591h1v1h-1zM754 596h1v1h-1zM754 600h1v1h-1zM754 605h1v1h-1zM754 609h1v1h-1zM754 614h1v1h-1zM754 619h1v1h-1zM754 623h1v1h-1zM754 628h1v1h-1zM754 633h1v1h-1zM754 637h1v1h-1zM754 642h1v1h-1zM754 647h1v1h-1zM754 651h1v1h-1zM754 656h1v1h-1zM754 661h1v1h-1zM754 665h1v1h-1zM754 670h1v1h-1zM754 674h1v1h-1zM754 679h1v1h-1zM754 684h1v1h-1zM754 688h1v1h-1zM754 693h1v1h-1zM754 698h1v1h-1zM754 702h1v1h-1zM754 707h1v1h-1zM754 712h1v1h-1zM754 716h1v1h-1zM754 721h1v1h-1zM754 726h1v1h-1zM754 730h1v1h-1zM754 735h1v1h-1zM754 739h1v1h-1zM754 744h1v1h-1zM754 749h1v1h-1zM754 753h1v1h-1zM754 762h1v1h-1zM754 767h1v1h-1zM754 772h1v1h-1zM754 776h1v1h-1zM754 781h1v1h-1zM754 786h1v1h-1zM754 790h1v1h-1zM754 795h1v1h-1zM754 800h1v1h-1zM754 804h1v1h-1zM754 809h1v1h-1zM754 814h1v1h-1zM754 818h1v1h-1zM754 823h1v1h-1zM754 828h1v1h-1zM754 832h1v1h-1zM754 837h1v1h-1zM754 842h1v1h-1zM754 846h1v1h-1zM754 851h1v1h-1zM754 856h1v1h-1zM754 860h1v1h-1zM754 865h1v1h-1zM754 870h1v1h-1zM754 874h1v1h-1zM754 879h1v1h-1zM754 884h1v1h-1zM754 888h1v1h-1zM754 893h1v1h-1zM754 898h1v1h-1zM754 902h1v1h-1zM754 907h1v1h-1zM754 912h1v1h-1zM754 916h1v1h-1zM754 921h1v1h-1zM754 926h1v1h-1zM754 930h1v1h-1zM754 935h1v1h-1zM754 940h1v1h-1zM754 944h1v1h-1zM754 949h1v1h-1zM754 954h1v1h-1zM754 958h1v1h-1zM754 963h1v1h-1zM754 968h1v1h-1zM754 972h1v1h-1zM754 977h1v1h-1zM754 982h1v1h-1zM754 986h1v1h-1zM754 991h1v1h-1zM789 58h1v1h-1zM789 81h1v1h-1zM789 105h1v1h-1zM789 128h1v1h-1zM789 151h1v1h-1zM789 174h1v1h-1zM789 198h1v1h-1zM789 221h1v1h-1zM789 244h1v1h-1zM789 267h1v1h-1zM789 292h1v1h-1zM789 315h1v1h-1zM789 338h1v1h-1zM789 362h1v1h-1zM789 385h1v1h-1zM789 408h1v1h-1zM789 432h1v1h-1zM789 455h1v1h-1zM789 478h1v1h-1zM789 501h1v1h-1zM789 526h1v1h-1zM789 549h1v1h-1zM789 572h1v1h-1zM789 596h1v1h-1zM789 619h1v1h-1zM789 642h1v1h-1zM789 665h1v1h-1zM789 688h1v1h-1zM789 712h1v1h-1zM789 735h1v1h-1zM789 767h1v1h-1zM789 790h1v1h-1zM789 814h1v1h-1zM789 837h1v1h-1zM789 860h1v1h-1zM789 884h1v1h-1zM789 907h1v1h-1zM789 930h1v1h-1zM789 954h1v1h-1zM789 977h1v1h-1zM824 58h1v1h-1zM824 81h1v1h-1zM824 105h1v1h-1zM824 128h1v1h-1zM824 151h1v1h-1zM824 174h1v1h-1zM824 198h1v1h-1zM824 221h1v1h-1zM824 244h1v1h-1zM824 267h1v1h-1zM824 292h1v1h-1zM824 315h1v1h-1zM824 338h1v1h-1zM824 362h1v1h-1zM824 385h1v1h-1zM824 408h1v1h-1zM824 432h1v1h-1zM824 455h1v1h-1zM824 478h1v1h-1zM824 501h1v1h-1zM824 526h1v1h-1zM824 549h1v1h-1zM824 572h1v1h-1zM824 596h1v1h-1zM824 619h1v1h-1zM824 642h1v1h-1zM824 665h1v1h-1zM824 688h1v1h-1zM824 712h1v1h-1zM824 735h1v1h-1zM824 767h1v1h-1zM824 790h1v1h-1zM824 814h1v1h-1zM824 837h1v1h-1zM824 860h1v1h-1zM824 884h1v1h-1zM824 907h1v1h-1zM824 930h1v1h-1zM824 954h1v1h-1zM824 977h1v1h-1zM859 58h1v1h-1zM859 81h1v1h-1zM859 105h1v1h-1zM859 128h1v1h-1zM859 151h1v1h-1zM859 174h1v1h-1zM859 198h1v1h-1zM859 221h1v1h-1zM859 244h1v1h-1zM859 267h1v1h-1zM859 292h1v1h-1zM859 315h1v1h-1zM859 338h1v1h-1zM859 362h1v1h-1zM859 385h1v1h-1zM859 408h1v1h-1zM859 432h1v1h-1zM859 455h1v1h-1zM859 478h1v1h-1zM859 501h1v1h-1zM859 526h1v1h-1zM859 549h1v1h-1zM859 572h1v1h-1zM859 596h1v1h-1zM859 619h1v1h-1zM859 642h1v1h-1zM859 665h1v1h-1zM859 688h1v1h-1zM859 712h1v1h-1zM859 735h1v1h-1zM859 767h1v1h-1zM859 790h1v1h-1zM859 814h1v1h-1zM859 837h1v1h-1zM859 860h1v1h-1zM859 884h1v1h-1zM859 907h1v1h-1zM859 930h1v1h-1zM859 954h1v1h-1zM859 977h1v1h-1zM894 58h1v1h-1zM894 81h1v1h-1zM894 105h1v1h-1zM894 128h1v1h-1zM894 151h1v1h-1zM894 174h1v1h-1zM894 198h1v1h-1zM894 221h1v1h-1zM894 244h1v1h-1zM894 267h1v1h-1zM894 292h1v1h-1zM894 315h1v1h-1zM894 338h1v1h-1zM894 362h1v1h-1zM894 385h1v1h-1zM894 408h1v1h-1zM894 432h1v1h-1zM894 455h1v1h-1zM894 478h1v1h-1zM894 501h1v1h-1zM894 526h1v1h-1zM894 549h1v1h-1zM894 572h1v1h-1zM894 596h1v1h-1zM894 619h1v1h-1zM894 642h1v1h-1zM894 665h1v1h-1zM894 688h1v1h-1zM894 712h1v1h-1zM894 735h1v1h-1zM894 767h1v1h-1zM894 790h1v1h-1zM894 814h1v1h-1zM894 837h1v1h-1zM894 860h1v1h-1zM894 884h1v1h-1zM894 907h1v1h-1zM894 930h1v1h-1zM894 954h1v1h-1zM894 977h1v1h-1zM929 58h1v1h-1zM929 63h1v1h-1zM929 67h1v1h-1zM929 72h1v1h-1zM929 77h1v1h-1zM929 81h1v1h-1zM929 86h1v1h-1zM929 91h1v1h-1zM929 95h1v1h-1zM929 100h1v1h-1zM929 105h1v1h-1zM929 109h1v1h-1zM929 114h1v1h-1zM929 119h1v1h-1zM929 123h1v1h-1zM929 128h1v1h-1zM929 132h1v1h-1zM929 137h1v1h-1zM929 142h1v1h-1zM929 146h1v1h-1zM929 151h1v1h-1zM929 156h1v1h-1zM929 160h1v1h-1zM929 165h1v1h-1zM929 170h1v1h-1zM929 174h1v1h-1zM929 179h1v1h-1zM929 184h1v1h-1zM929 188h1v1h-1zM929 193h1v1h-1zM929 198h1v1h-1zM929 202h1v1h-1zM929 207h1v1h-1zM929 211h1v1h-1zM929 216h1v1h-1zM929 221h1v1h-1zM929 225h1v1h-1zM929 230h1v1h-1zM929 235h1v1h-1zM929 239h1v1h-1zM929 244h1v1h-1zM929 249h1v1h-1zM929 253h1v1h-1zM929 258h1v1h-1zM929 263h1v1h-1zM929 267h1v1h-1zM929 272h1v1h-1zM929 277h1v1h-1zM929 281h1v1h-1zM929 286h1v1h-1zM929 292h1v1h-1zM929 297h1v1h-1zM929 301h1v1h-1zM929 306h1v1h-1zM929 311h1v1h-1zM929 315h1v1h-1zM929 320h1v1h-1zM929 324h1v1h-1zM929 329h1v1h-1zM929 334h1v1h-1zM929 338h1v1h-1zM929 343h1v1h-1zM929 348h1v1h-1zM929 352h1v1h-1zM929 357h1v1h-1zM929 362h1v1h-1zM929 366h1v1h-1zM929 371h1v1h-1zM929 376h1v1h-1zM929 380h1v1h-1zM929 385h1v1h-1zM929 390h1v1h-1zM929 394h1v1h-1zM929 399h1v1h-1zM929 404h1v1h-1zM929 408h1v1h-1zM929 413h1v1h-1zM929 418h1v1h-1zM929 422h1v1h-1zM929 427h1v1h-1zM929 432h1v1h-1zM929 436h1v1h-1zM929 441h1v1h-1zM929 446h1v1h-1zM929 450h1v1h-1zM929 455h1v1h-1zM929 459h1v1h-1zM929 464h1v1h-1zM929 469h1v1h-1zM929 473h1v1h-1zM929 478h1v1h-1zM929 483h1v1h-1zM929 487h1v1h-1zM929 492h1v1h-1zM929 497h1v1h-1zM929 501h1v1h-1zM929 506h1v1h-1zM929 511h1v1h-1zM929 515h1v1h-1zM929 520h1v1h-1zM929 526h1v1h-1zM929 531h1v1h-1zM929 535h1v1h-1zM929 540h1v1h-1zM929 544h1v1h-1zM929 549h1v1h-1zM929 554h1v1h-1zM929 558h1v1h-1zM929 563h1v1h-1zM929 568h1v1h-1zM929 572h1v1h-1zM929 577h1v1h-1zM929 582h1v1h-1zM929 586h1v1h-1zM929 591h1v1h-1zM929 596h1v1h-1zM929 600h1v1h-1zM929 605h1v1h-1zM929 609h1v1h-1zM929 614h1v1h-1zM929 619h1v1h-1zM929 623h1v1h-1zM929 628h1v1h-1zM929 633h1v1h-1zM929 637h1v1h-1zM929 642h1v1h-1zM929 647h1v1h-1zM929 651h1v1h-1zM929 656h1v1h-1zM929 661h1v1h-1zM929 665h1v1h-1zM929 670h1v1h-1zM929 674h1v1h-1zM929 679h1v1h-1zM929 684h1v1h-1zM929 688h1v1h-1zM929 693h1v1h-1zM929 698h1v1h-1zM929 702h1v1h-1zM929 707h1v1h-1zM929 712h1v1h-1zM929 716h1v1h-1zM929 721h1v1h-1zM929 726h1v1h-1zM929 730h1v1h-1zM929 735h1v1h-1zM929 739h1v1h-1zM929 744h1v1h-1zM929 749h1v1h-1zM929 753h1v1h-1zM929 762h1v1h-1zM929 767h1v1h-1zM929 772h1v1h-1zM929 776h1v1h-1zM929 781h1v1h-1zM929 786h1v1h-1zM929 790h1v1h-1zM929 795h1v1h-1zM929 800h1v1h-1zM929 804h1v1h-1zM929 809h1v1h-1zM929 814h1v1h-1zM929 818h1v1h-1zM929 823h1v1h-1zM929 828h1v1h-1zM929 832h1v1h-1zM929 837h1v1h-1zM929 842h1v1h-1zM929 846h1v1h-1zM929 851h1v1h-1zM929 856h1v1h-1zM929 860h1v1h-1zM929 865h1v1h-1zM929 870h1v1h-1zM929 874h1v1h-1zM929 879h1v1h-1zM929 884h1v1h-1zM929 888h1v1h-1zM929 893h1v1h-1zM929 898h1v1h-1zM929 902h1v1h-1zM929 907h1v1h-1zM929 912h1v1h-1zM929 916h1v1h-1zM929 921h1v1h-1zM929 926h1v1h-1zM929 930h1v1h-1zM929 935h1v1h-1zM929 940h1v1h-1zM929 944h1v1h-1zM929 949h1v1h-1zM929 954h1v1h-1zM929 958h1v1h-1zM929 963h1v1h-1zM929 968h1v1h-1zM929 972h1v1h-1zM929 977h1v1h-1zM929 982h1v1h-1zM929 986h1v1h-1zM929 991h1v1h-1zM964 58h1v1h-1zM964 81h1v1h-1zM964 105h1v1h-1zM964 128h1v1h-1zM964 151h1v1h-1zM964 174h1v1h-1zM964 198h1v1h-1zM964 221h1v1h-1zM964 244h1v1h-1zM964 267h1v1h-1zM964 292h1v1h-1zM964 315h1v1h-1zM964 338h1v1h-1zM964 362h1v1h-1zM964 385h1v1h-1zM964 408h1v1h-1zM964 432h1v1h-1zM964 455h1v1h-1zM964 478h1v1h-1zM964 501h1v1h-1zM964 526h1v1h-1zM964 549h1v1h-1zM964 572h1v1h-1zM964 596h1v1h-1zM964 619h1v1h-1zM964 642h1v1h-1zM964 665h1v1h-1zM964 688h1v1h-1zM964 712h1v1h-1zM964 735h1v1h-1zM964 767h1v1h-1zM964 790h1v1h-1zM964 814h1v1h-1zM964 837h1v1h-1zM964 860h1v1h-1zM964 884h1v1h-1zM964 907h1v1h-1zM964 930h1v1h-1zM964 954h1v1h-1zM964 977h1v1h-1zM999 58h1v1h-1zM999 81h1v1h-1zM999 105h1v1h-1zM999 128h1v1h-1zM999 151h1v1h-1zM999 174h1v1h-1zM999 198h1v1h-1zM999 221h1v1h-1zM999 244h1v1h-1zM999 267h1v1h-1zM999 292h1v1h-1zM999 315h1v1h-1zM999 338h1v1h-1zM999 362h1v1h-1zM999 385h1v1h-1zM999 408h1v1h-1zM999 432h1v1h-1zM999 455h1v1h-1zM999 478h1v1h-1zM999 501h1v1h-1zM999 526h1v1h-1zM999 549h1v1h-1zM999 572h1v1h-1zM999 596h1v1h-1zM999 619h1v1h-1zM999 642h1v1h-1zM999 665h1v1h-1zM999 688h1v1h-1zM999 712h1v1h-1zM999 735h1v1h-1zM999 767h1v1h-1zM999 790h1v1h-1zM999 814h1v1h-1zM999 837h1v1h-1zM999 860h1v1h-1zM999 884h1v1h-1zM999 907h1v1h-1zM999 930h1v1h-1zM999 954h1v1h-1zM999 977h1v1h-1zM1034 58h1v1h-1zM1034 81h1v1h-1zM1034 105h1v1h-1zM1034 128h1v1h-1zM1034 151h1v1h-1zM1034 174h1v1h-1zM1034 198h1v1h-1zM1034 221h1v1h-1zM1034 244h1v1h-1zM1034 267h1v1h-1zM1034 292h1v1h-1zM1034 315h1v1h-1zM1034 338h1v1h-1zM1034 362h1v1h-1zM1034 385h1v1h-1zM1034 408h1v1h-1zM1034 432h1v1h-1zM1034 455h1v1h-1zM1034 478h1v1h-1zM1034 501h1v1h-1zM1034 526h1v1h-1zM1034 549h1v1h-1zM1034 572h1v1h-1zM1034 596h1v1h-1zM1034 619h1v1h-1zM1034 642h1v1h-1zM1034 665h1v1h-1zM1034 688h1v1h-1zM1034 712h1v1h-1zM1034 735h1v1h-1zM1034 767h1v1h-1zM1034 790h1v1h-1zM1034 814h1v1h-1zM1034 837h1v1h-1zM1034 860h1v1h-1zM1034 884h1v1h-1zM1034 907h1v1h-1zM1034 930h1v1h-1zM1034 954h1v1h-1zM1034 977h1v1h-1zM1069 58h1v1h-1zM1069 81h1v1h-1zM1069 105h1v1h-1zM1069 128h1v1h-1zM1069 151h1v1h-1zM1069 174h1v1h-1zM1069 198h1v1h-1zM1069 221h1v1h-1zM1069 244h1v1h-1zM1069 267h1v1h-1zM1069 292h1v1h-1zM1069 315h1v1h-1zM1069 338h1v1h-1zM1069 362h1v1h-1zM1069 385h1v1h-1zM1069 408h1v1h-1zM1069 432h1v1h-1zM1069 455h1v1h-1zM1069 478h1v1h-1zM1069 501h1v1h-1zM1069 526h1v1h-1zM1069 549h1v1h-1zM1069 572h1v1h-1zM1069 596h1v1h-1zM1069 619h1v1h-1zM1069 642h1v1h-1zM1069 665h1v1h-1zM1069 688h1v1h-1zM1069 712h1v1h-1zM1069 735h1v1h-1zM1069 767h1v1h-1zM1069 790h1v1h-1zM1069 814h1v1h-1zM1069 837h1v1h-1zM1069 860h1v1h-1zM1069 884h1v1h-1zM1069 907h1v1h-1zM1069 930h1v1h-1zM1069 954h1v1h-1zM1069 977h1v1h-1zM1104 58h1v1h-1zM1104 63h1v1h-1zM1104 67h1v1h-1zM1104 72h1v1h-1zM1104 77h1v1h-1zM1104 81h1v1h-1zM1104 86h1v1h-1zM1104 91h1v1h-1zM1104 95h1v1h-1zM1104 100h1v1h-1zM1104 105h1v1h-1zM1104 109h1v1h-1zM1104 114h1v1h-1zM1104 119h1v1h-1zM1104 123h1v1h-1zM1104 128h1v1h-1zM1104 132h1v1h-1zM1104 137h1v1h-1zM1104 142h1v1h-1zM1104 146h1v1h-1zM1104 151h1v1h-1zM1104 156h1v1h-1zM1104 160h1v1h-1zM1104 165h1v1h-1zM1104 170h1v1h-1zM1104 174h1v1h-1zM1104 179h1v1h-1zM1104 184h1v1h-1zM1104 188h1v1h-1zM1104 193h1v1h-1zM1104 198h1v1h-1zM1104 202h1v1h-1zM1104 207h1v1h-1zM1104 211h1v1h-1zM1104 216h1v1h-1zM1104 221h1v1h-1zM1104 225h1v1h-1zM1104 230h1v1h-1zM1104 235h1v1h-1zM1104 239h1v1h-1zM1104 244h1v1h-1zM1104 249h1v1h-1zM1104 253h1v1h-1zM1104 258h1v1h-1zM1104 263h1v1h-1zM1104 267h1v1h-1zM1104 272h1v1h-1zM1104 277h1v1h-1zM1104 281h1v1h-1zM1104 286h1v1h-1zM1104 292h1v1h-1zM1104 297h1v1h-1zM1104 301h1v1h-1zM1104 306h1v1h-1zM1104 311h1v1h-1zM1104 315h1v1h-1zM1104 320h1v1h-1zM1104 324h1v1h-1zM1104 329h1v1h-1zM1104 334h1v1h-1zM1104 338h1v1h-1zM1104 343h1v1h-1zM1104 348h1v1h-1zM1104 352h1v1h-1zM1104 357h1v1h-1zM1104 362h1v1h-1zM1104 366h1v1h-1zM1104 371h1v1h-1zM1104 376h1v1h-1zM1104 380h1v1h-1zM1104 385h1v1h-1zM1104 390h1v1h-1zM1104 394h1v1h-1zM1104 399h1v1h-1zM1104 404h1v1h-1zM1104 408h1v1h-1zM1104 413h1v1h-1zM1104 418h1v1h-1zM1104 422h1v1h-1zM1104 427h1v1h-1zM1104 432h1v1h-1zM1104 436h1v1h-1zM1104 441h1v1h-1zM1104 446h1v1h-1zM1104 450h1v1h-1zM1104 455h1v1h-1zM1104 459h1v1h-1zM1104 464h1v1h-1zM1104 469h1v1h-1zM1104 473h1v1h-1zM1104 478h1v1h-1zM1104 483h1v1h-1zM1104 487h1v1h-1zM1104 492h1v1h-1zM1104 497h1v1h-1zM1104 501h1v1h-1zM1104 506h1v1h-1zM1104 511h1v1h-1zM1104 515h1v1h-1zM1104 520h1v1h-1zM1104 526h1v1h-1zM1104 531h1v1h-1zM1104 535h1v1h-1zM1104 540h1v1h-1zM1104 544h1v1h-1zM1104 549h1v1h-1zM1104 554h1v1h-1zM1104 558h1v1h-1zM1104 563h1v1h-1zM1104 568h1v1h-1zM1104 572h1v1h-1zM1104 577h1v1h-1zM1104 582h1v1h-1zM1104 586h1v1h-1zM1104 591h1v1h-1zM1104 596h1v1h-1zM1104 600h1v1h-1zM1104 605h1v1h-1zM1104 609h1v1h-1zM1104 614h1v1h-1zM1104 619h1v1h-1zM1104 623h1v1h-1zM1104 628h1v1h-1zM1104 633h1v1h-1zM1104 637h1v1h-1zM1104 642h1v1h-1zM1104 647h1v1h-1zM1104 651h1v1h-1zM1104 656h1v1h-1zM1104 661h1v1h-1zM1104 665h1v1h-1zM1104 670h1v1h-1zM1104 674h1v1h-1zM1104 679h1v1h-1zM1104 684h1v1h-1zM1104 688h1v1h-1zM1104 693h1v1h-1zM1104 698h1v1h-1zM1104 702h1v1h-1zM1104 707h1v1h-1zM1104 712h1v1h-1zM1104 716h1v1h-1zM1104 721h1v1h-1zM1104 726h1v1h-1zM1104 730h1v1h-1zM1104 735h1v1h-1zM1104 739h1v1h-1zM1104 744h1v1h-1zM1104 749h1v1h-1zM1104 753h1v1h-1zM1104 762h1v1h-1zM1104 767h1v1h-1zM1104 772h1v1h-1zM1104 776h1v1h-1zM1104 781h1v1h-1zM1104 786h1v1h-1zM1104 790h1v1h-1zM1104 795h1v1h-1zM1104 800h1v1h-1zM1104 804h1v1h-1zM1104 809h1v1h-1zM1104 814h1v1h-1zM1104 818h1v1h-1zM1104 823h1v1h-1zM1104 828h1v1h-1zM1104 832h1v1h-1zM1104 837h1v1h-1zM1104 842h1v1h-1zM1104 846h1v1h-1zM1104 851h1v1h-1zM1104 856h1v1h-1zM1104 860h1v1h-1zM1104 865h1v1h-1zM1104 870h1v1h-1zM1104 874h1v1h-1zM1104 879h1v1h-1zM1104 884h1v1h-1zM1104 888h1v1h-1zM1104 893h1v1h-1zM1104 898h1v1h-1zM1104 902h1v1h-1zM1104 907h1v1h-1zM1104 912h1v1h-1zM1104 916h1v1h-1zM1104 921h1v1h-1zM1104 926h1v1h-1zM1104 930h1v1h-1zM1104 935h1v1h-1zM1104 940h1v1h-1zM1104 944h1v1h-1zM1104 949h1v1h-1zM1104 954h1v1h-1zM1104 958h1v1h-1zM1104 963h1v1h-1zM1104 968h1v1h-1zM1104 972h1v1h-1zM1104 977h1v1h-1zM1104 982h1v1h-1zM1104 986h1v1h-1zM1104 991h1v1h-1zM1139 58h1v1h-1zM1139 81h1v1h-1zM1139 105h1v1h-1zM1139 128h1v1h-1zM1139 151h1v1h-1zM1139 174h1v1h-1zM1139 198h1v1h-1zM1139 221h1v1h-1zM1139 244h1v1h-1zM1139 267h1v1h-1zM1139 292h1v1h-1zM1139 315h1v1h-1zM1139 338h1v1h-1zM1139 362h1v1h-1zM1139 385h1v1h-1zM1139 408h1v1h-1zM1139 432h1v1h-1zM1139 455h1v1h-1zM1139 478h1v1h-1zM1139 501h1v1h-1zM1139 526h1v1h-1zM1139 549h1v1h-1zM1139 572h1v1h-1zM1139 596h1v1h-1zM1139 619h1v1h-1zM1139 642h1v1h-1zM1139 665h1v1h-1zM1139 688h1v1h-1zM1139 712h1v1h-1zM1139 735h1v1h-1zM1139 767h1v1h-1zM1139 790h1v1h-1zM1139 814h1v1h-1zM1139 837h1v1h-1zM1139 860h1v1h-1zM1139 884h1v1h-1zM1139 907h1v1h-1zM1139 930h1v1h-1zM1139 954h1v1h-1zM1139 977h1v1h-1zM1174 58h1v1h-1zM1174 81h1v1h-1zM1174 105h1v1h-1zM1174 128h1v1h-1zM1174 151h1v1h-1zM1174 174h1v1h-1zM1174 198h1v1h-1zM1174 221h1v1h-1zM1174 244h1v1h-1zM1174 267h1v1h-1zM1174 292h1v1h-1zM1174 315h1v1h-1zM1174 338h1v1h-1zM1174 362h1v1h-1zM1174 385h1v1h-1zM1174 408h1v1h-1zM1174 432h1v1h-1zM1174 455h1v1h-1zM1174 478h1v1h-1zM1174 501h1v1h-1zM1174 526h1v1h-1zM1174 549h1v1h-1zM1174 572h1v1h-1zM1174 596h1v1h-1zM1174 619h1v1h-1zM1174 642h1v1h-1zM1174 665h1v1h-1zM1174 688h1v1h-1zM1174 712h1v1h-1zM1174 735h1v1h-1zM1174 767h1v1h-1zM1174 790h1v1h-1zM1174 814h1v1h-1zM1174 837h1v1h-1zM1174 860h1v1h-1zM1174 884h1v1h-1zM1174 907h1v1h-1zM1174 930h1v1h-1zM1174 954h1v1h-1zM1174 977h1v1h-1zM1209 58h1v1h-1zM1209 81h1v1h-1zM1209 105h1v1h-1zM1209 128h1v1h-1zM1209 151h1v1h-1zM1209 174h1v1h-1zM1209 198h1v1h-1zM1209 221h1v1h-1zM1209 244h1v1h-1zM1209 267h1v1h-1zM1209 292h1v1h-1zM1209 315h1v1h-1zM1209 338h1v1h-1zM1209 362h1v1h-1zM1209 385h1v1h-1zM1209 408h1v1h-1zM1209 432h1v1h-1zM1209 455h1v1h-1zM1209 478h1v1h-1zM1209 501h1v1h-1zM1209 526h1v1h-1zM1209 549h1v1h-1zM1209 572h1v1h-1zM1209 596h1v1h-1zM1209 619h1v1h-1zM1209 642h1v1h-1zM1209 665h1v1h-1zM1209 688h1v1h-1zM1209 712h1v1h-1zM1209 735h1v1h-1zM1209 767h1v1h-1zM1209 790h1v1h-1zM1209 814h1v1h-1zM1209 837h1v1h-1zM1209 860h1v1h-1zM1209 884h1v1h-1zM1209 907h1v1h-1zM1209 930h1v1h-1zM1209 954h1v1h-1zM1209 977h1v1h-1zM1244 58h1v1h-1zM1244 81h1v1h-1zM1244 105h1v1h-1zM1244 128h1v1h-1zM1244 151h1v1h-1zM1244 174h1v1h-1zM1244 198h1v1h-1zM1244 221h1v1h-1zM1244 244h1v1h-1zM1244 267h1v1h-1zM1244 292h1v1h-1zM1244 315h1v1h-1zM1244 338h1v1h-1zM1244 362h1v1h-1zM1244 385h1v1h-1zM1244 408h1v1h-1zM1244 432h1v1h-1zM1244 455h1v1h-1zM1244 478h1v1h-1zM1244 501h1v1h-1zM1244 526h1v1h-1zM1244 549h1v1h-1zM1244 572h1v1h-1zM1244 596h1v1h-1zM1244 619h1v1h-1zM1244 642h1v1h-1zM1244 665h1v1h-1zM1244 688h1v1h-1zM1244 712h1v1h-1zM1244 735h1v1h-1zM1244 767h1v1h-1zM1244 790h1v1h-1zM1244 814h1v1h-1zM1244 837h1v1h-1zM1244 860h1v1h-1zM1244 884h1v1h-1zM1244 907h1v1h-1zM1244 930h1v1h-1zM1244 954h1v1h-1zM1244 977h1v1h-1zM1279 58h1v1h-1zM1279 63h1v1h-1zM1279 67h1v1h-1zM1279 72h1v1h-1zM1279 77h1v1h-1zM1279 81h1v1h-1zM1279 86h1v1h-1zM1279 91h1v1h-1zM1279 95h1v1h-1zM1279 100h1v1h-1zM1279 105h1v1h-1zM1279 109h1v1h-1zM1279 114h1v1h-1zM1279 119h1v1h-1zM1279 123h1v1h-1zM1279 128h1v1h-1zM1279 132h1v1h-1zM1279 137h1v1h-1zM1279 142h1v1h-1zM1279 146h1v1h-1zM1279 151h1v1h-1zM1279 156h1v1h-1zM1279 160h1v1h-1zM1279 165h1v1h-1zM1279 170h1v1h-1zM1279 174h1v1h-1zM1279 179h1v1h-1zM1279 184h1v1h-1zM1279 188h1v1h-1zM1279 193h1v1h-1zM1279 198h1v1h-1zM1279 202h1v1h-1zM1279 207h1v1h-1zM1279 211h1v1h-1zM1279 216h1v1h-1zM1279 221h1v1h-1zM1279 225h1v1h-1zM1279 230h1v1h-1zM1279 235h1v1h-1zM1279 239h1v1h-1zM1279 244h1v1h-1zM1279 249h1v1h-1zM1279 253h1v1h-1zM1279 258h1v1h-1zM1279 263h1v1h-1zM1279 267h1v1h-1zM1279 272h1v1h-1zM1279 277h1v1h-1zM1279 281h1v1h-1zM1279 286h1v1h-1zM1279 292h1v1h-1zM1279 297h1v1h-1zM1279 301h1v1h-1zM1279 306h1v1h-1zM1279 311h1v1h-1zM1279 315h1v1h-1zM1279 320h1v1h-1zM1279 324h1v1h-1zM1279 329h1v1h-1zM1279 334h1v1h-1zM1279 338h1v1h-1zM1279 343h1v1h-1zM1279 348h1v1h-1zM1279 352h1v1h-1zM1279 357h1v1h-1zM1279 362h1v1h-1zM1279 366h1v1h-1zM1279 371h1v1h-1zM1279 376h1v1h-1zM1279 380h1v1h-1zM1279 385h1v1h-1zM1279 390h1v1h-1zM1279 394h1v1h-1zM1279 399h1v1h-1zM1279 404h1v1h-1zM1279 408h1v1h-1zM1279 413h1v1h-1zM1279 418h1v1h-1zM1279 422h1v1h-1zM1279 427h1v1h-1zM1279 432h1v1h-1zM1279 436h1v1h-1zM1279 441h1v1h-1zM1279 446h1v1h-1zM1279 450h1v1h-1zM1279 455h1v1h-1zM1279 459h1v1h-1zM1279 464h1v1h-1zM1279 469h1v1h-1zM1279 473h1v1h-1zM1279 478h1v1h-1zM1279 483h1v1h-1zM1279 487h1v1h-1zM1279 492h1v1h-1zM1279 497h1v1h-1zM1279 501h1v1h-1zM1279 506h1v1h-1zM1279 511h1v1h-1zM1279 515h1v1h-1zM1279 520h1v1h-1zM1279 526h1v1h-1zM1279 531h1v1h-1zM1279 535h1v1h-1zM1279 540h1v1h-1zM1279 544h1v1h-1zM1279 549h1v1h-1zM1279 554h1v1h-1zM1279 558h1v1h-1zM1279 563h1v1h-1zM1279 568h1v1h-1zM1279 572h1v1h-1zM1279 577h1v1h-1zM1279 582h1v1h-1zM1279 586h1v1h-1zM1279 591h1v1h-1zM1279 596h1v1h-1zM1279 600h1v1h-1zM1279 605h1v1h-1zM1279 609h1v1h-1zM1279 614h1v1h-1zM1279 619h1v1h-1zM1279 623h1v1h-1zM1279 628h1v1h-1zM1279 633h1v1h-1zM1279 637h1v1h-1zM1279 642h1v1h-1zM1279 647h1v1h-1zM1279 651h1v1h-1zM1279 656h1v1h-1zM1279 661h1v1h-1zM1279 665h1v1h-1zM1279 670h1v1h-1zM1279 674h1v1h-1zM1279 679h1v1h-1zM1279 684h1v1h-1zM1279 688h1v1h-1zM1279 693h1v1h-1zM1279 698h1v1h-1zM1279 702h1v1h-1zM1279 707h1v1h-1zM1279 712h1v1h-1zM1279 716h1v1h-1zM1279 721h1v1h-1zM1279 726h1v1h-1zM1279 730h1v1h-1zM1279 735h1v1h-1zM1279 739h1v1h-1zM1279 744h1v1h-1zM1279 749h1v1h-1zM1279 753h1v1h-1zM1279 762h1v1h-1zM1279 767h1v1h-1zM1279 772h1v1h-1zM1279 776h1v1h-1zM1279 781h1v1h-1zM1279 786h1v1h-1zM1279 790h1v1h-1zM1279 795h1v1h-1zM1279 800h1v1h-1zM1279 804h1v1h-1zM1279 809h1v1h-1zM1279 814h1v1h-1zM1279 818h1v1h-1zM1279 823h1v1h-1zM1279 828h1v1h-1zM1279 832h1v1h-1zM1279 837h1v1h-1zM1279 842h1v1h-1zM1279 846h1v1h-1zM1279 851h1v1h-1zM1279 856h1v1h-1zM1279 860h1v1h-1zM1279 865h1v1h-1zM1279 870h1v1h-1zM1279 874h1v1h-1zM1279 879h1v1h-1zM1279 884h1v1h-1zM1279 888h1v1h-1zM1279 893h1v1h-1zM1279 898h1v1h-1zM1279 902h1v1h-1zM1279 907h1v1h-1zM1279 912h1v1h-1zM1279 916h1v1h-1zM1279 921h1v1h-1zM1279 926h1v1h-1zM1279 930h1v1h-1zM1279 935h1v1h-1zM1279 940h1v1h-1zM1279 944h1v1h-1zM1279 949h1v1h-1zM1279 954h1v1h-1zM1279 958h1v1h-1zM1279 963h1v1h-1zM1279 968h1v1h-1zM1279 972h1v1h-1zM1279 977h1v1h-1zM1279 982h1v1h-1zM1279 986h1v1h-1zM1279 991h1v1h-1zM1314 58h1v1h-1zM1314 81h1v1h-1zM1314 105h1v1h-1zM1314 128h1v1h-1zM1314 151h1v1h-1zM1314 174h1v1h-1zM1314 198h1v1h-1zM1314 221h1v1h-1zM1314 244h1v1h-1zM1314 267h1v1h-1zM1314 292h1v1h-1zM1314 315h1v1h-1zM1314 338h1v1h-1zM1314 362h1v1h-1zM1314 385h1v1h-1zM1314 408h1v1h-1zM1314 432h1v1h-1zM1314 455h1v1h-1zM1314 478h1v1h-1zM1314 501h1v1h-1zM1314 526h1v1h-1zM1314 549h1v1h-1zM1314 572h1v1h-1zM1314 596h1v1h-1zM1314 619h1v1h-1zM1314 642h1v1h-1zM1314 665h1v1h-1zM1314 688h1v1h-1zM1314 712h1v1h-1zM1314 735h1v1h-1zM1314 767h1v1h-1zM1314 790h1v1h-1zM1314 814h1v1h-1zM1314 837h1v1h-1zM1314 860h1v1h-1zM1314 884h1v1h-1zM1314 907h1v1h-1zM1314 930h1v1h-1zM1314 954h1v1h-1zM1314 977h1v1h-1zM1349 58h1v1h-1zM1349 81h1v1h-1zM1349 105h1v1h-1zM1349 128h1v1h-1zM1349 151h1v1h-1zM1349 174h1v1h-1zM1349 198h1v1h-1zM1349 221h1v1h-1zM1349 244h1v1h-1zM1349 267h1v1h-1zM1349 292h1v1h-1zM1349 315h1v1h-1zM1349 338h1v1h-1zM1349 362h1v1h-1zM1349 385h1v1h-1zM1349 408h1v1h-1zM1349 432h1v1h-1zM1349 455h1v1h-1zM1349 478h1v1h-1zM1349 501h1v1h-1zM1349 526h1v1h-1zM1349 549h1v1h-1zM1349 572h1v1h-1zM1349 596h1v1h-1zM1349 619h1v1h-1zM1349 642h1v1h-1zM1349 665h1v1h-1zM1349 688h1v1h-1zM1349 712h1v1h-1zM1349 735h1v1h-1zM1349 767h1v1h-1zM1349 790h1v1h-1zM1349 814h1v1h-1zM1349 837h1v1h-1zM1349 860h1v1h-1zM1349 884h1v1h-1zM1349 907h1v1h-1zM1349 930h1v1h-1zM1349 954h1v1h-1zM1349 977h1v1h-1zM1384 58h1v1h-1zM1384 81h1v1h-1zM1384 105h1v1h-1zM1384 128h1v1h-1zM1384 151h1v1h-1zM1384 174h1v1h-1zM1384 198h1v1h-1zM1384 221h1v1h-1zM1384 244h1v1h-1zM1384 267h1v1h-1zM1384 292h1v1h-1zM1384 315h1v1h-1zM1384 338h1v1h-1zM1384 362h1v1h-1zM1384 385h1v1h-1zM1384 408h1v1h-1zM1384 432h1v1h-1zM1384 455h1v1h-1zM1384 478h1v1h-1zM1384 501h1v1h-1zM1384 526h1v1h-1zM1384 549h1v1h-1zM1384 572h1v1h-1zM1384 596h1v1h-1zM1384 619h1v1h-1zM1384 642h1v1h-1zM1384 665h1v1h-1zM1384 688h1v1h-1zM1384 712h1v1h-1zM1384 735h1v1h-1zM1384 767h1v1h-1zM1384 790h1v1h-1zM1384 814h1v1h-1zM1384 837h1v1h-1zM1384 860h1v1h-1zM1384 884h1v1h-1zM1384 907h1v1h-1zM1384 930h1v1h-1zM1384 954h1v1h-1zM1384 977h1v1h-1zM1419 58h1v1h-1zM1419 81h1v1h-1zM1419 105h1v1h-1zM1419 128h1v1h-1zM1419 151h1v1h-1zM1419 174h1v1h-1zM1419 198h1v1h-1zM1419 221h1v1h-1zM1419 244h1v1h-1zM1419 267h1v1h-1zM1419 292h1v1h-1zM1419 315h1v1h-1zM1419 338h1v1h-1zM1419 362h1v1h-1zM1419 385h1v1h-1zM1419 408h1v1h-1zM1419 432h1v1h-1zM1419 455h1v1h-1zM1419 478h1v1h-1zM1419 501h1v1h-1zM1419 526h1v1h-1zM1419 549h1v1h-1zM1419 572h1v1h-1zM1419 596h1v1h-1zM1419 619h1v1h-1zM1419 642h1v1h-1zM1419 665h1v1h-1zM1419 688h1v1h-1zM1419 712h1v1h-1zM1419 735h1v1h-1zM1419 767h1v1h-1zM1419 790h1v1h-1zM1419 814h1v1h-1zM1419 837h1v1h-1zM1419 860h1v1h-1zM1419 884h1v1h-1zM1419 907h1v1h-1zM1419 930h1v1h-1zM1419 954h1v1h-1zM1419 977h1v1h-1zM1454 58h1v1h-1zM1454 63h1v1h-1zM1454 67h1v1h-1zM1454 72h1v1h-1zM1454 77h1v1h-1zM1454 81h1v1h-1zM1454 86h1v1h-1zM1454 91h1v1h-1zM1454 95h1v1h-1zM1454 100h1v1h-1zM1454 105h1v1h-1zM1454 109h1v1h-1zM1454 114h1v1h-1zM1454 119h1v1h-1zM1454 123h1v1h-1zM1454 128h1v1h-1zM1454 132h1v1h-1zM1454 137h1v1h-1zM1454 142h1v1h-1zM1454 146h1v1h-1zM1454 151h1v1h-1zM1454 156h1v1h-1zM1454 160h1v1h-1zM1454 165h1v1h-1zM1454 170h1v1h-1zM1454 174h1v1h-1zM1454 179h1v1h-1zM1454 184h1v1h-1zM1454 188h1v1h-1zM1454 193h1v1h-1zM1454 198h1v1h-1zM1454 202h1v1h-1zM1454 207h1v1h-1zM1454 211h1v1h-1zM1454 216h1v1h-1zM1454 221h1v1h-1zM1454 225h1v1h-1zM1454 230h1v1h-1zM1454 235h1v1h-1zM1454 239h1v1h-1zM1454 244h1v1h-1zM1454 249h1v1h-1zM1454 253h1v1h-1zM1454 258h1v1h-1zM1454 263h1v1h-1zM1454 267h1v1h-1zM1454 272h1v1h-1zM1454 277h1v1h-1zM1454 281h1v1h-1zM1454 286h1v1h-1zM1454 292h1v1h-1zM1454 297h1v1h-1zM1454 301h1v1h-1zM1454 306h1v1h-1zM1454 311h1v1h-1zM1454 315h1v1h-1zM1454 320h1v1h-1zM1454 324h1v1h-1zM1454 329h1v1h-1zM1454 334h1v1h-1zM1454 338h1v1h-1zM1454 343h1v1h-1zM1454 348h1v1h-1zM1454 352h1v1h-1zM1454 357h1v1h-1zM1454 362h1v1h-1zM1454 366h1v1h-1zM1454 371h1v1h-1zM1454 376h1v1h-1zM1454 380h1v1h-1zM1454 385h1v1h-1zM1454 390h1v1h-1zM1454 394h1v1h-1zM1454 399h1v1h-1zM1454 404h1v1h-1zM1454 408h1v1h-1zM1454 413h1v1h-1zM1454 418h1v1h-1zM1454 422h1v1h-1zM1454 427h1v1h-1zM1454 432h1v1h-1zM1454 436h1v1h-1zM1454 441h1v1h-1zM1454 446h1v1h-1zM1454 450h1v1h-1zM1454 455h1v1h-1zM1454 459h1v1h-1zM1454 464h1v1h-1zM1454 469h1v1h-1zM1454 473h1v1h-1zM1454 478h1v1h-1zM1454 483h1v1h-1zM1454 487h1v1h-1zM1454 492h1v1h-1zM1454 497h1v1h-1zM1454 501h1v1h-1zM1454 506h1v1h-1zM1454 511h1v1h-1zM1454 515h1v1h-1zM1454 520h1v1h-1zM1454 526h1v1h-1zM1454 531h1v1h-1zM1454 535h1v1h-1zM1454 540h1v1h-1zM1454 544h1v1h-1zM1454 549h1v1h-1zM1454 554h1v1h-1zM1454 558h1v1h-1zM1454 563h1v1h-1zM1454 568h1v1h-1zM1454 572h1v1h-1zM1454 577h1v1h-1zM1454 582h1v1h-1zM1454 586h1v1h-1zM1454 591h1v1h-1zM1454 596h1v1h-1zM1454 600h1v1h-1zM1454 605h1v1h-1zM1454 609h1v1h-1zM1454 614h1v1h-1zM1454 619h1v1h-1zM1454 623h1v1h-1zM1454 628h1v1h-1zM1454 633h1v1h-1zM1454 637h1v1h-1zM1454 642h1v1h-1zM1454 647h1v1h-1zM1454 651h1v1h-1zM1454 656h1v1h-1zM1454 661h1v1h-1zM1454 665h1v1h-1zM1454 670h1v1h-1zM1454 674h1v1h-1zM1454 679h1v1h-1zM1454 684h1v1h-1zM1454 688h1v1h-1zM1454 693h1v1h-1zM1454 698h1v1h-1zM1454 702h1v1h-1zM1454 707h1v1h-1zM1454 712h1v1h-1zM1454 716h1v1h-1zM1454 721h1v1h-1zM1454 726h1v1h-1zM1454 730h1v1h-1zM1454 735h1v1h-1zM1454 739h1v1h-1zM1454 744h1v1h-1zM1454 749h1v1h-1zM1454 753h1v1h-1zM1454 762h1v1h-1zM1454 767h1v1h-1zM1454 772h1v1h-1zM1454 776h1v1h-1zM1454 781h1v1h-1zM1454 786h1v1h-1zM1454 790h1v1h-1zM1454 795h1v1h-1zM1454 800h1v1h-1zM1454 804h1v1h-1zM1454 809h1v1h-1zM1454 814h1v1h-1zM1454 818h1v1h-1zM1454 823h1v1h-1zM1454 828h1v1h-1zM1454 832h1v1h-1zM1454 837h1v1h-1zM1454 842h1v1h-1zM1454 846h1v1h-1zM1454 851h1v1h-1zM1454 856h1v1h-1zM1454 860h1v1h-1zM1454 865h1v1h-1zM1454 870h1v1h-1zM1454 874h1v1h-1zM1454 879h1v1h-1zM1454 884h1v1h-1zM1454 888h1v1h-1zM1454 893h1v1h-1zM1454 898h1v1h-1zM1454 902h1v1h-1zM1454 907h1v1h-1zM1454 912h1v1h-1zM1454 916h1v1h-1zM1454 921h1v1h-1zM1454 926h1v1h-1zM1454 930h1v1h-1zM1454 935h1v1h-1zM1454 940h1v1h-1zM1454 944h1v1h-1zM1454 949h1v1h-1zM1454 954h1v1h-1zM1454 958h1v1h-1zM1454 963h1v1h-1zM1454 968h1v1h-1zM1454 972h1v1h-1zM1454 977h1v1h-1zM1454 982h1v1h-1zM1454 986h1v1h-1zM1454 991h1v1h-1zM1489 58h1v1h-1zM1489 81h1v1h-1zM1489 105h1v1h-1zM1489 128h1v1h-1zM1489 151h1v1h-1zM1489 174h1v1h-1zM1489 198h1v1h-1zM1489 221h1v1h-1zM1489 244h1v1h-1zM1489 267h1v1h-1zM1489 292h1v1h-1zM1489 315h1v1h-1zM1489 338h1v1h-1zM1489 362h1v1h-1zM1489 385h1v1h-1zM1489 408h1v1h-1zM1489 432h1v1h-1zM1489 455h1v1h-1zM1489 478h1v1h-1zM1489 501h1v1h-1zM1489 526h1v1h-1zM1489 549h1v1h-1zM1489 572h1v1h-1zM1489 596h1v1h-1zM1489 619h1v1h-1zM1489 642h1v1h-1zM1489 665h1v1h-1zM1489 688h1v1h-1zM1489 712h1v1h-1zM1489 735h1v1h-1zM1489 767h1v1h-1zM1489 790h1v1h-1zM1489 814h1v1h-1zM1489 837h1v1h-1zM1489 860h1v1h-1zM1489 884h1v1h-1zM1489 907h1v1h-1zM1489 930h1v1h-1zM1489 954h1v1h-1zM1489 977h1v1h-1zM1524 58h1v1h-1zM1524 81h1v1h-1zM1524 105h1v1h-1zM1524 128h1v1h-1zM1524 151h1v1h-1zM1524 174h1v1h-1zM1524 198h1v1h-1zM1524 221h1v1h-1zM1524 244h1v1h-1zM1524 267h1v1h-1zM1524 292h1v1h-1zM1524 315h1v1h-1zM1524 338h1v1h-1zM1524 362h1v1h-1zM1524 385h1v1h-1zM1524 408h1v1h-1zM1524 432h1v1h-1zM1524 455h1v1h-1zM1524 478h1v1h-1zM1524 501h1v1h-1zM1524 526h1v1h-1zM1524 549h1v1h-1zM1524 572h1v1h-1zM1524 596h1v1h-1zM1524 619h1v1h-1zM1524 642h1v1h-1zM1524 665h1v1h-1zM1524 688h1v1h-1zM1524 712h1v1h-1zM1524 735h1v1h-1zM1524 767h1v1h-1zM1524 790h1v1h-1zM1524 814h1v1h-1zM1524 837h1v1h-1zM1524 860h1v1h-1zM1524 884h1v1h-1zM1524 907h1v1h-1zM1524 930h1v1h-1zM1524 954h1v1h-1zM1524 977h1v1h-1zM1559 58h1v1h-1zM1559 81h1v1h-1zM1559 105h1v1h-1zM1559 128h1v1h-1zM1559 151h1v1h-1zM1559 174h1v1h-1zM1559 198h1v1h-1zM1559 221h1v1h-1zM1559 244h1v1h-1zM1559 267h1v1h-1zM1559 292h1v1h-1zM1559 315h1v1h-1zM1559 338h1v1h-1zM1559 362h1v1h-1zM1559 385h1v1h-1zM1559 408h1v1h-1zM1559 432h1v1h-1zM1559 455h1v1h-1zM1559 478h1v1h-1zM1559 501h1v1h-1zM1559 526h1v1h-1zM1559 549h1v1h-1zM1559 572h1v1h-1zM1559 596h1v1h-1zM1559 619h1v1h-1zM1559 642h1v1h-1zM1559 665h1v1h-1zM1559 688h1v1h-1zM1559 712h1v1h-1zM1559 735h1v1h-1zM1559 767h1v1h-1zM1559 790h1v1h-1zM1559 814h1v1h-1zM1559 837h1v1h-1zM1559 860h1v1h-1zM1559 884h1v1h-1zM1559 907h1v1h-1zM1559 930h1v1h-1zM1559 954h1v1h-1zM1559 977h1v1h-1zM1594 58h1v1h-1zM1594 81h1v1h-1zM1594 105h1v1h-1zM1594 128h1v1h-1zM1594 151h1v1h-1zM1594 174h1v1h-1zM1594 198h1v1h-1zM1594 221h1v1h-1zM1594 244h1v1h-1zM1594 267h1v1h-1zM1594 292h1v1h-1zM1594 315h1v1h-1zM1594 338h1v1h-1zM1594 362h1v1h-1zM1594 385h1v1h-1zM1594 408h1v1h-1zM1594 432h1v1h-1zM1594 455h1v1h-1zM1594 478h1v1h-1zM1594 501h1v1h-1zM1594 526h1v1h-1zM1594 549h1v1h-1zM1594 572h1v1h-1zM1594 596h1v1h-1zM1594 619h1v1h-1zM1594 642h1v1h-1zM1594 665h1v1h-1zM1594 688h1v1h-1zM1594 712h1v1h-1zM1594 735h1v1h-1zM1594 767h1v1h-1zM1594 790h1v1h-1zM1594 814h1v1h-1zM1594 837h1v1h-1zM1594 860h1v1h-1zM1594 884h1v1h-1zM1594 907h1v1h-1zM1594 930h1v1h-1zM1594 954h1v1h-1zM1594 977h1v1h-1zM1629 58h1v1h-1zM1629 63h1v1h-1zM1629 67h1v1h-1zM1629 72h1v1h-1zM1629 77h1v1h-1zM1629 81h1v1h-1zM1629 86h1v1h-1zM1629 91h1v1h-1zM1629 95h1v1h-1zM1629 100h1v1h-1zM1629 105h1v1h-1zM1629 109h1v1h-1zM1629 114h1v1h-1zM1629 119h1v1h-1zM1629 123h1v1h-1zM1629 128h1v1h-1zM1629 132h1v1h-1zM1629 137h1v1h-1zM1629 142h1v1h-1zM1629 146h1v1h-1zM1629 151h1v1h-1zM1629 156h1v1h-1zM1629 160h1v1h-1zM1629 165h1v1h-1zM1629 170h1v1h-1zM1629 174h1v1h-1zM1629 179h1v1h-1zM1629 184h1v1h-1zM1629 188h1v1h-1zM1629 193h1v1h-1zM1629 198h1v1h-1zM1629 202h1v1h-1zM1629 207h1v1h-1zM1629 211h1v1h-1zM1629 216h1v1h-1zM1629 221h1v1h-1zM1629 225h1v1h-1zM1629 230h1v1h-1zM1629 235h1v1h-1zM1629 239h1v1h-1zM1629 244h1v1h-1zM1629 249h1v1h-1zM1629 253h1v1h-1zM1629 258h1v1h-1zM1629 263h1v1h-1zM1629 267h1v1h-1zM1629 272h1v1h-1zM1629 277h1v1h-1zM1629 281h1v1h-1zM1629 286h1v1h-1zM1629 292h1v1h-1zM1629 297h1v1h-1zM1629 301h1v1h-1zM1629 306h1v1h-1zM1629 311h1v1h-1zM1629 315h1v1h-1zM1629 320h1v1h-1zM1629 324h1v1h-1zM1629 329h1v1h-1zM1629 334h1v1h-1zM1629 338h1v1h-1zM1629 343h1v1h-1zM1629 348h1v1h-1zM1629 352h1v1h-1zM1629 357h1v1h-1zM1629 362h1v1h-1zM1629 366h1v1h-1zM1629 371h1v1h-1zM1629 376h1v1h-1zM1629 380h1v1h-1zM1629 385h1v1h-1zM1629 390h1v1h-1zM1629 394h1v1h-1zM1629 399h1v1h-1zM1629 404h1v1h-1zM1629 408h1v1h-1zM1629 413h1v1h-1zM1629 418h1v1h-1zM1629 422h1v1h-1zM1629 427h1v1h-1zM1629 432h1v1h-1zM1629 436h1v1h-1zM1629 441h1v1h-1zM1629 446h1v1h-1zM1629 450h1v1h-1zM1629 455h1v1h-1zM1629 459h1v1h-1zM1629 464h1v1h-1zM1629 469h1v1h-1zM1629 473h1v1h-1zM1629 478h1v1h-1zM1629 483h1v1h-1zM1629 487h1v1h-1zM1629 492h1v1h-1zM1629 497h1v1h-1zM1629 501h1v1h-1zM1629 506h1v1h-1zM1629 511h1v1h-1zM1629 515h1v1h-1zM1629 520h1v1h-1zM1629 526h1v1h-1zM1629 531h1v1h-1zM1629 535h1v1h-1zM1629 540h1v1h-1zM1629 544h1v1h-1zM1629 549h1v1h-1zM1629 554h1v1h-1zM1629 558h1v1h-1zM1629 563h1v1h-1zM1629 568h1v1h-1zM1629 572h1v1h-1zM1629 577h1v1h-1zM1629 582h1v1h-1zM1629 586h1v1h-1zM1629 591h1v1h-1zM1629 596h1v1h-1zM1629 600h1v1h-1zM1629 605h1v1h-1zM1629 609h1v1h-1zM1629 614h1v1h-1zM1629 619h1v1h-1zM1629 623h1v1h-1zM1629 628h1v1h-1zM1629 633h1v1h-1zM1629 637h1v1h-1zM1629 642h1v1h-1zM1629 647h1v1h-1zM1629 651h1v1h-1zM1629 656h1v1h-1zM1629 661h1v1h-1zM1629 665h1v1h-1zM1629 670h1v1h-1zM1629 674h1v1h-1zM1629 679h1v1h-1zM1629 684h1v1h-1zM1629 688h1v1h-1zM1629 693h1v1h-1zM1629 698h1v1h-1zM1629 702h1v1h-1zM1629 707h1v1h-1zM1629 712h1v1h-1zM1629 716h1v1h-1zM1629 721h1v1h-1zM1629 726h1v1h-1zM1629 730h1v1h-1zM1629 735h1v1h-1zM1629 739h1v1h-1zM1629 744h1v1h-1zM1629 749h1v1h-1zM1629 753h1v1h-1zM1629 762h1v1h-1zM1629 767h1v1h-1zM1629 772h1v1h-1zM1629 776h1v1h-1zM1629 781h1v1h-1zM1629 786h1v1h-1zM1629 790h1v1h-1zM1629 795h1v1h-1zM1629 800h1v1h-1zM1629 804h1v1h-1zM1629 809h1v1h-1zM1629 814h1v1h-1zM1629 818h1v1h-1zM1629 823h1v1h-1zM1629 828h1v1h-1zM1629 832h1v1h-1zM1629 837h1v1h-1zM1629 842h1v1h-1zM1629 846h1v1h-1zM1629 851h1v1h-1zM1629 856h1v1h-1zM1629 860h1v1h-1zM1629 865h1v1h-1zM1629 870h1v1h-1zM1629 874h1v1h-1zM1629 879h1v1h-1zM1629 884h1v1h-1zM1629 888h1v1h-1zM1629 893h1v1h-1zM1629 898h1v1h-1zM1629 902h1v1h-1zM1629 907h1v1h-1zM1629 912h1v1h-1zM1629 916h1v1h-1zM1629 921h1v1h-1zM1629 926h1v1h-1zM1629 930h1v1h-1zM1629 935h1v1h-1zM1629 940h1v1h-1zM1629 944h1v1h-1zM1629 949h1v1h-1zM1629 954h1v1h-1zM1629 958h1v1h-1zM1629 963h1v1h-1zM1629 968h1v1h-1zM1629 972h1v1h-1zM1629 977h1v1h-1zM1629 982h1v1h-1zM1629 986h1v1h-1zM1629 991h1v1h-1zM1664 58h1v1h-1zM1664 81h1v1h-1zM1664 105h1v1h-1zM1664 128h1v1h-1zM1664 151h1v1h-1zM1664 174h1v1h-1zM1664 198h1v1h-1zM1664 221h1v1h-1zM1664 244h1v1h-1zM1664 267h1v1h-1zM1664 292h1v1h-1zM1664 315h1v1h-1zM1664 338h1v1h-1zM1664 362h1v1h-1zM1664 385h1v1h-1zM1664 408h1v1h-1zM1664 432h1v1h-1zM1664 455h1v1h-1zM1664 478h1v1h-1zM1664 501h1v1h-1zM1664 526h1v1h-1zM1664 549h1v1h-1zM1664 572h1v1h-1zM1664 596h1v1h-1zM1664 619h1v1h-1zM1664 642h1v1h-1zM1664 665h1v1h-1zM1664 688h1v1h-1zM1664 712h1v1h-1zM1664 735h1v1h-1zM1664 767h1v1h-1zM1664 790h1v1h-1zM1664 814h1v1h-1zM1664 837h1v1h-1zM1664 860h1v1h-1zM1664 884h1v1h-1zM1664 907h1v1h-1zM1664 930h1v1h-1zM1664 954h1v1h-1zM1664 977h1v1h-1zM1699 58h1v1h-1zM1699 81h1v1h-1zM1699 105h1v1h-1zM1699 128h1v1h-1zM1699 151h1v1h-1zM1699 174h1v1h-1zM1699 198h1v1h-1zM1699 221h1v1h-1zM1699 244h1v1h-1zM1699 267h1v1h-1zM1699 292h1v1h-1zM1699 315h1v1h-1zM1699 338h1v1h-1zM1699 362h1v1h-1zM1699 385h1v1h-1zM1699 408h1v1h-1zM1699 432h1v1h-1zM1699 455h1v1h-1zM1699 478h1v1h-1zM1699 501h1v1h-1zM1699 526h1v1h-1zM1699 549h1v1h-1zM1699 572h1v1h-1zM1699 596h1v1h-1zM1699 619h1v1h-1zM1699 642h1v1h-1zM1699 665h1v1h-1zM1699 688h1v1h-1zM1699 712h1v1h-1zM1699 735h1v1h-1zM1699 767h1v1h-1zM1699 790h1v1h-1zM1699 814h1v1h-1zM1699 837h1v1h-1zM1699 860h1v1h-1zM1699 884h1v1h-1zM1699 907h1v1h-1zM1699 930h1v1h-1zM1699 954h1v1h-1zM1699 977h1v1h-1zM1734 58h1v1h-1zM1734 81h1v1h-1zM1734 105h1v1h-1zM1734 128h1v1h-1zM1734 151h1v1h-1zM1734 174h1v1h-1zM1734 198h1v1h-1zM1734 221h1v1h-1zM1734 244h1v1h-1zM1734 267h1v1h-1zM1734 292h1v1h-1zM1734 315h1v1h-1zM1734 338h1v1h-1zM1734 362h1v1h-1zM1734 385h1v1h-1zM1734 408h1v1h-1zM1734 432h1v1h-1zM1734 455h1v1h-1zM1734 478h1v1h-1zM1734 501h1v1h-1zM1734 526h1v1h-1zM1734 549h1v1h-1zM1734 572h1v1h-1zM1734 596h1v1h-1zM1734 619h1v1h-1zM1734 642h1v1h-1zM1734 665h1v1h-1zM1734 688h1v1h-1zM1734 712h1v1h-1zM1734 735h1v1h-1zM1734 767h1v1h-1zM1734 790h1v1h-1zM1734 814h1v1h-1zM1734 837h1v1h-1zM1734 860h1v1h-1zM1734 884h1v1h-1zM1734 907h1v1h-1zM1734 930h1v1h-1zM1734 954h1v1h-1zM1734 977h1v1h-1z" fill="#b4b4b4"/>
<rect x="1717.2" y="76.1" width="29.3" height="12" fill="#000"/><rect x="1717.2" y="99.3" width="29.3" height="12" fill="#000"/><rect x="1717.2" y="122.6" width="29.3" height="12" fill="#000"/><rect x="1717.2" y="145.8" width="29.3" height="12" fill="#000"/><rect x="1717.2" y="169.1" width="29.3" height="12" fill="#000"/><rect x="1717.2" y="192.3" width="29.3" height="12" fill="#000"/><rect x="1717.2" y="215.5" width="29.3" height="12" fill="#000"/><rect x="1724.5" y="238.8" width="22.0" height="12" fill="#000"/><rect x="1724.5" y="262.0" width="22.0" height="12" fill="#000"/><rect x="1724.5" y="308.4" width="22.0" height="12" fill="#000"/><rect x="1698.8" y="331.7" width="47.7" height="12" fill="#000"/><rect x="1698.8" y="354.9" width="47.7" height="12" fill="#000"/><rect x="1698.8" y="378.2" width="47.7" height="12" fill="#000"/><rect x="1698.8" y="401.5" width="47.7" height="12" fill="#000"/><rect x="1724.5" y="424.8" width="22.0" height="12" fill="#000"/><rect x="1694.3" y="448.0" width="52.2" height="12" fill="#000"/><rect x="1694.3" y="471.3" width="52.2" height="12" fill="#000"/><rect x="1694.3" y="494.6" width="52.2" height="12" fill="#000"/><rect x="1681.0" y="544.0" width="65.5" height="12" fill="#000"/><rect x="1682.0" y="567.2" width="64.5" height="12" fill="#000"/><rect x="1681.0" y="590.4" width="65.5" height="12" fill="#000"/><rect x="1681.0" y="613.6" width="65.5" height="12" fill="#000"/><rect x="1681.0" y="636.8" width="65.5" height="12" fill="#000"/><rect x="1681.0" y="660.0" width="65.5" height="12" fill="#000"/><rect x="1681.0" y="683.3" width="65.5" height="12" fill="#000"/><rect x="1688.4" y="706.5" width="58.1" height="12" fill="#000"/><rect x="1725.5" y="729.7" width="21.0" height="12" fill="#000"/><rect x="1684.6" y="762.2" width="61.9" height="12" fill="#000"/><rect x="1684.6" y="785.5" width="61.9" height="12" fill="#000"/><rect x="1684.6" y="808.9" width="61.9" height="12" fill="#000"/><rect x="1684.6" y="832.2" width="61.9" height="12" fill="#000"/><rect x="1684.6" y="855.5" width="61.9" height="12" fill="#000"/><rect x="1684.6" y="878.9" width="61.9" height="12" fill="#000"/><rect x="1685.6" y="902.2" width="60.9" height="12" fill="#000"/><rect x="1725.3" y="925.5" width="21.2" height="12" fill="#000"/><rect x="1681.1" y="948.8" width="65.4" height="12" fill="#000"/><rect x="1680.1" y="972.2" width="66.4" height="12" fill="#000"/>
<line x1="55.5" y1="62" x2="55.5" y2="992" stroke="#d4d4d4" stroke-width="1" stroke-dasharray="5 5"/>
<line x1="3" y1="267.5" x2="1718" y2="267.5" stroke="#cfcfcf" stroke-width="1" stroke-dasharray="5 5"/>
<line x1="3" y1="431.5" x2="1751" y2="431.5" stroke="#cfcfcf" stroke-width="1" stroke-dasharray="5 5"/>
<line x1="3" y1="735.5" x2="1718" y2="735.5" stroke="#cfcfcf" stroke-width="1" stroke-dasharray="5 5"/>
<line x1="3" y1="930.5" x2="1718" y2="930.5" stroke="#cfcfcf" stroke-width="1" stroke-dasharray="5 5"/>
<path d="M3.0 265.5 L55.0 265.5 L56.0 262.0 L57.0 268.0 L58.0 264.0 L60.0 266.0 L62.0 265.0 L63.0 258.0 L64.0 270.0 L65.0 256.0 L66.7 258.1 L70.8 252.9 L81.2 245.1 L91.7 238.3 L102.0 233.1 L112.5 229.0 L122.9 225.3 L133.3 222.9 L143.8 220.8 L154.2 219.0 L164.6 217.7 L175.0 216.7 L190.6 215.4 L206.0 214.7 L227.0 214.2 L248.0 213.6 L290.0 213.5 L350.0 214.6 L395.8 216.0 L405.0 216.0 L409.0 215.5 L413.5 214.2 L418.0 216.5 L425.0 217.0 L440.0 216.5 L444.8 215.0 L449.0 217.5 L458.3 218.8 L489.6 220.2 L527.0 221.9 L562.5 224.0 L566.7 223.0 L570.0 224.3 L583.3 225.6 L604.0 227.5 L620.8 230.8 L650.0 235.4 L671.0 237.9 L702.5 242.7 L723.0 246.2 L744.0 249.4 L755.6 251.7 L798.0 252.7 L799.4 250.8 L804.6 253.5 L808.8 252.0 L821.0 252.5 L827.5 254.2 L833.8 255.2 L900.4 255.2 L908.8 257.3 L917.0 258.3 L942.0 258.3 L971.0 257.3 L1013.0 257.3 L1017.0 259.0 L1043.8 258.0 L1068.0 260.0 L1106.0 258.6 L1131.0 258.6 L1143.8 261.0 L1160.0 259.5 L1210.0 259.0 L1215.0 261.0 L1250.0 260.6 L1280.0 259.5 L1295.0 262.0 L1310.0 262.0 L1330.0 260.5 L1365.0 260.5 L1370.0 262.0 L1395.0 262.0 L1415.0 259.0 L1440.0 258.5 L1450.0 260.0 L1485.0 260.0 L1495.0 258.5 L1520.0 259.5 L1535.0 261.0 L1560.0 261.0 L1570.0 259.0 L1600.0 259.5 L1630.0 260.0 L1640.0 261.0 L1700.0 262.0 L1751.0 262.0" fill="none" stroke="#f2ee2a" stroke-width="1.45" stroke-linejoin="round"/>
<path d="M63 258V271M58 260V268" stroke="#f2ee2a" stroke-width="1.5"/>
<rect x="3" y="429.6" width="1748" height="1.4" fill="#8cd13a"/>
<path d="M10 428.8h12v1h-12zM28 428.8h1v1h-1zM33 428.8h1v1h-1zM52 428.8h2v1h-2zM56 428.8h3v1h-3zM60 428.8h8v1h-8zM73 428.8h3v1h-3zM77 428.8h8v1h-8zM96 428.8h3v1h-3zM103 428.8h3v1h-3zM121 428.8h8v1h-8zM148 428.8h8v1h-8zM244 428.8h1v1h-1zM263 428.8h1v1h-1zM268 428.8h8v1h-8zM286 428.8h12v1h-12zM315 428.8h2v1h-2zM329 428.8h3v1h-3zM354 428.8h5v1h-5zM366 428.8h2v1h-2zM370 428.8h5v1h-5zM378 428.8h8v1h-8zM387 428.8h8v1h-8zM404 428.8h12v1h-12zM419 428.8h8v1h-8zM433 428.8h5v1h-5zM439 428.8h2v1h-2zM444 428.8h12v1h-12zM458 428.8h8v1h-8zM472 428.8h8v1h-8zM496 428.8h2v1h-2zM511 428.8h12v1h-12zM534 428.8h12v1h-12zM547 428.8h3v1h-3zM575 428.8h3v1h-3zM579 428.8h2v1h-2zM584 428.8h2v1h-2zM595 428.8h12v1h-12zM624 428.8h12v1h-12zM640 428.8h5v1h-5zM646 428.8h12v1h-12zM660 428.8h1v1h-1zM665 428.8h12v1h-12zM723 428.8h2v1h-2zM751 428.8h8v1h-8zM777 428.8h2v1h-2zM780 428.8h8v1h-8zM794 428.8h2v1h-2zM799 428.8h1v1h-1zM802 428.8h12v1h-12zM839 428.8h5v1h-5zM845 428.8h5v1h-5zM851 428.8h12v1h-12zM872 428.8h2v1h-2zM876 428.8h5v1h-5zM903 428.8h12v1h-12zM919 428.8h3v1h-3zM925 428.8h3v1h-3zM931 428.8h1v1h-1zM963 428.8h1v1h-1zM965 428.8h2v1h-2zM977 428.8h5v1h-5zM986 428.8h12v1h-12zM1019 428.8h1v1h-1zM1021 428.8h5v1h-5zM1043 428.8h2v1h-2zM1070 428.8h3v1h-3zM1074 428.8h3v1h-3zM1092 428.8h8v1h-8zM1109 428.8h12v1h-12zM1125 428.8h8v1h-8zM1135 428.8h2v1h-2zM1145 428.8h2v1h-2zM1150 428.8h5v1h-5zM1171 428.8h8v1h-8zM1182 428.8h1v1h-1zM1185 428.8h3v1h-3zM1197 428.8h2v1h-2zM1202 428.8h2v1h-2zM1205 428.8h3v1h-3zM1220 428.8h1v1h-1zM1222 428.8h2v1h-2zM1225 428.8h5v1h-5zM1233 428.8h12v1h-12zM1270 428.8h2v1h-2zM1316 428.8h1v1h-1zM1319 428.8h12v1h-12zM1338 428.8h12v1h-12zM1352 428.8h5v1h-5zM1431 428.8h5v1h-5zM1439 428.8h12v1h-12zM1453 428.8h12v1h-12zM1468 428.8h5v1h-5zM1474 428.8h8v1h-8zM1483 428.8h5v1h-5zM1497 428.8h3v1h-3zM1537 428.8h5v1h-5zM1559 428.8h3v1h-3zM1563 428.8h3v1h-3zM1569 428.8h5v1h-5zM1576 428.8h12v1h-12zM1591 428.8h3v1h-3zM1610 428.8h1v1h-1zM1612 428.8h12v1h-12zM1632 428.8h8v1h-8zM1692 428.8h2v1h-2zM1697 428.8h3v1h-3zM1720 428.8h1v1h-1zM1723 428.8h1v1h-1zM1728 428.8h8v1h-8zM1739 428.8h5v1h-5zM1746 428.8h2v1h-2z" fill="#86c836"/>
<path d="M3 733.5L55.7 733.5C160 705 320 663 405 641.2C520 615 650 590 754.4 579.4C900 563 1050 549 1235 549.2C1420 550 1600 562 1751 575.75" fill="none" stroke="#f08c28" stroke-width="1.15"/>
<path d="M3.0 930.0 L40.0 930.0 L48.0 929.0 L55.0 928.0 L56.0 924.0 L57.0 932.0 L58.0 926.0 L59.0 933.0 L60.0 927.0 L61.0 931.0 L62.0 926.0 L63.0 930.0 L64.0 936.0 L65.0 945.0 L66.0 941.0 L67.4 939.4 L71.1 943.1 L75.5 936.5 L77.0 940.2 L81.5 933.5 L83.7 937.2 L87.4 932.0 L89.6 934.6 L93.3 930.5 L96.3 929.8 L100.7 927.6 L103.7 929.0 L110.4 925.4 L114.0 926.0 L120.7 923.1 L121.5 924.6 L130.0 921.7 L150.0 917.0 L165.0 916.0 L195.0 913.5 L227.5 912.0 L321.0 909.0 L405.6 907.5 L408.0 909.0 L413.0 916.0 L420.0 911.0 L440.0 906.5 L444.7 915.0 L452.0 908.0 L458.8 903.4 L465.0 902.5 L471.0 905.0 L487.0 904.0 L490.0 901.0 L509.0 902.0 L512.0 903.4 L526.0 903.4 L527.5 900.3 L552.5 901.0 L565.0 902.5 L568.0 911.0 L571.0 906.5 L602.5 907.5 L609.0 902.5 L644.0 901.6 L647.0 897.8 L658.0 897.8 L664.0 901.0 L722.0 898.4 L725.0 894.0 L731.0 897.0 L742.0 896.0 L750.0 894.0 L797.0 893.0 L799.0 899.0 L803.0 888.0 L804.0 896.0 L812.5 896.0 L825.0 893.0 L865.6 890.0 L897.0 886.0 L908.0 880.6 L915.6 880.6 L917.0 877.5 L937.5 878.4 L950.0 876.0 L990.6 875.0 L993.0 871.0 L1014.0 869.7 L1020.0 866.0 L1053.0 866.6 L1061.0 862.5 L1100.0 862.8 L1128.0 858.8 L1137.5 854.0 L1172.0 854.0 L1207.0 849.7 L1216.0 844.0 L1279.0 841.0 L1294.0 835.0 L1310.0 836.0 L1363.0 831.0 L1369.0 827.0 L1404.0 827.5 L1416.0 828.8 L1454.0 821.0 L1479.0 818.4 L1491.0 820.0 L1535.0 810.6 L1557.0 808.0 L1569.0 809.0 L1591.0 803.8 L1610.0 803.8 L1629.0 798.8 L1660.0 794.4 L1691.0 790.3 L1751.0 784.0" fill="none" stroke="#7a2e96" stroke-width="1.5" stroke-linejoin="round"/>
<path d="M56.3 904V954M64.4 902V970M65.5 938V962" stroke="#7a2e96" stroke-width="1.3"/>
<text x="1745.5" y="86.1" font-size="13" letter-spacing="0.15" fill="#eee534" text-anchor="end">40 V</text>
<text x="1745.5" y="109.3" font-size="13" letter-spacing="0.15" fill="#eee534" text-anchor="end">35 V</text>
<text x="1745.5" y="132.6" font-size="13" letter-spacing="0.15" fill="#eee534" text-anchor="end">30 V</text>
<text x="1745.5" y="155.8" font-size="13" letter-spacing="0.15" fill="#eee534" text-anchor="end">25 V</text>
<text x="1745.5" y="179.1" font-size="13" letter-spacing="0.15" fill="#eee534" text-anchor="end">20 V</text>
<text x="1745.5" y="202.3" font-size="13" letter-spacing="0.15" fill="#eee534" text-anchor="end">15 V</text>
<text x="1745.5" y="225.5" font-size="13" letter-spacing="0.15" fill="#eee534" text-anchor="end">10 V</text>
<text x="1745.5" y="248.8" font-size="13" letter-spacing="0.15" fill="#eee534" text-anchor="end">5 V</text>
<text x="1745.5" y="272.0" font-size="13" letter-spacing="0.15" fill="#eee534" text-anchor="end">0 V</text>
<text x="1745.5" y="318.4" font-size="13" letter-spacing="0.15" fill="#8cc43a" text-anchor="end">1 V</text>
<text x="1745.5" y="341.7" font-size="13" letter-spacing="0.15" fill="#8cc43a" text-anchor="end">800 mV</text>
<text x="1745.5" y="364.9" font-size="13" letter-spacing="0.15" fill="#8cc43a" text-anchor="end">600 mV</text>
<text x="1745.5" y="388.2" font-size="13" letter-spacing="0.15" fill="#8cc43a" text-anchor="end">400 mV</text>
<text x="1745.5" y="411.5" font-size="13" letter-spacing="0.15" fill="#8cc43a" text-anchor="end">200 mV</text>
<text x="1745.5" y="434.8" font-size="13" letter-spacing="0.15" fill="#8cc43a" text-anchor="end">0 V</text>
<text x="1745.5" y="458.0" font-size="13" letter-spacing="0.15" fill="#8cc43a" text-anchor="end">-200 mV</text>
<text x="1745.5" y="481.3" font-size="13" letter-spacing="0.15" fill="#8cc43a" text-anchor="end">-400 mV</text>
<text x="1745.5" y="504.6" font-size="13" letter-spacing="0.15" fill="#8cc43a" text-anchor="end">-600 mV</text>
<text x="1745.5" y="554.0" font-size="13" letter-spacing="0.15" fill="#e39031" text-anchor="end">584.48 mT</text>
<text x="1745.5" y="577.2" font-size="13" letter-spacing="0.15" fill="#e39031" text-anchor="end">511.42 mT</text>
<text x="1745.5" y="600.4" font-size="13" letter-spacing="0.15" fill="#e39031" text-anchor="end">438.36 mT</text>
<text x="1745.5" y="623.6" font-size="13" letter-spacing="0.15" fill="#e39031" text-anchor="end">365.30 mT</text>
<text x="1745.5" y="646.8" font-size="13" letter-spacing="0.15" fill="#e39031" text-anchor="end">292.24 mT</text>
<text x="1745.5" y="670.0" font-size="13" letter-spacing="0.15" fill="#e39031" text-anchor="end">219.18 mT</text>
<text x="1745.5" y="693.3" font-size="13" letter-spacing="0.15" fill="#e39031" text-anchor="end">146.12 mT</text>
<text x="1745.5" y="716.5" font-size="13" letter-spacing="0.15" fill="#e39031" text-anchor="end">73.06 mT</text>
<text x="1745.5" y="739.7" font-size="13" letter-spacing="0.15" fill="#e39031" text-anchor="end">0 T</text>
<text x="1745.5" y="772.2" font-size="13" letter-spacing="0.15" fill="#8b3fa3" text-anchor="end">833.501 A</text>
<text x="1745.5" y="795.5" font-size="13" letter-spacing="0.15" fill="#8b3fa3" text-anchor="end">714.430 A</text>
<text x="1745.5" y="818.9" font-size="13" letter-spacing="0.15" fill="#8b3fa3" text-anchor="end">595.358 A</text>
<text x="1745.5" y="842.2" font-size="13" letter-spacing="0.15" fill="#8b3fa3" text-anchor="end">476.286 A</text>
<text x="1745.5" y="865.5" font-size="13" letter-spacing="0.15" fill="#8b3fa3" text-anchor="end">357.215 A</text>
<text x="1745.5" y="888.9" font-size="13" letter-spacing="0.15" fill="#8b3fa3" text-anchor="end">238.143 A</text>
<text x="1745.5" y="912.2" font-size="13" letter-spacing="0.15" fill="#8b3fa3" text-anchor="end">119.072 A</text>
<text x="1745.5" y="935.5" font-size="13" letter-spacing="0.15" fill="#8b3fa3" text-anchor="end">0 A</text>
<text x="1745.5" y="958.8" font-size="13" letter-spacing="0.15" fill="#8b3fa3" text-anchor="end">-119.072 A</text>
<text x="1745.5" y="982.2" font-size="13" letter-spacing="0.15" fill="#8b3fa3" text-anchor="end">-238.143 A</text>
<text x="55.5" y="986.6" font-size="13.2" letter-spacing="0.15" fill="#a9a9a9" text-anchor="middle">0 s</text>
<text x="230.4" y="986.6" font-size="13.2" letter-spacing="0.15" fill="#a9a9a9" text-anchor="middle">4.5 ms</text>
<text x="405.3" y="986.6" font-size="13.2" letter-spacing="0.15" fill="#a9a9a9" text-anchor="middle">9 ms</text>
<text x="580.2" y="986.6" font-size="13.2" letter-spacing="0.15" fill="#a9a9a9" text-anchor="middle">13.5 ms</text>
<text x="755.1" y="986.6" font-size="13.2" letter-spacing="0.15" fill="#a9a9a9" text-anchor="middle">18 ms</text>
<text x="930.0" y="986.6" font-size="13.2" letter-spacing="0.15" fill="#a9a9a9" text-anchor="middle">22.5 ms</text>
<text x="1104.9" y="986.6" font-size="13.2" letter-spacing="0.15" fill="#a9a9a9" text-anchor="middle">27 ms</text>
<text x="1279.8" y="986.6" font-size="13.2" letter-spacing="0.15" fill="#a9a9a9" text-anchor="middle">31.5 ms</text>
<text x="1454.7" y="986.6" font-size="13.2" letter-spacing="0.15" fill="#a9a9a9" text-anchor="middle">36 ms</text>
<text x="1629.6" y="986.6" font-size="13.2" letter-spacing="0.15" fill="#a9a9a9" text-anchor="middle">40.5 ms</text>
<path d="M1710 65H1741Q1744 65 1744 68V98Z" fill="#555"/>
<circle cx="1737" cy="71.5" r="4" fill="none" stroke="#a0a0a0" stroke-width="1.6"/><path d="M1734 74.5L1728.3 80.5" stroke="#a0a0a0" stroke-width="2.6" stroke-linecap="round"/>
<path d="M9 162H77.5L84 174.5L77.5 187H9Q7 187 7 185V164Q7 162 9 162Z" fill="#1d1b08" stroke="#f2ee2a" stroke-width="2"/>
<path d="M33 162V187" stroke="#f2ee2a" stroke-width="2"/>
<text x="19.5" y="178.6" font-size="13" letter-spacing="-0.6" fill="#eee534" text-anchor="middle">C 1</text>
<text x="57.5" y="178.6" font-size="13" fill="#eee534" text-anchor="middle">20 V</text>
<text x="102" y="179" font-size="17.5" letter-spacing="1" fill="#eee534">U_loop,coil</text>
<path d="M9 396H77.5L83.5 408.5L77.5 421H9Q7 421 7 419V398Q7 396 9 396Z" fill="#0f1408" stroke="#8cc43a" stroke-width="2"/>
<path d="M33 396V421" stroke="#8cc43a" stroke-width="2"/>
<text x="19.5" y="412.6" font-size="13" letter-spacing="-0.6" fill="#8cc43a" text-anchor="middle">C 4</text>
<text x="57.5" y="412.6" font-size="13" letter-spacing="-0.4" fill="#8cc43a" text-anchor="middle">200 mV</text>
<text x="102" y="413" font-size="17.5" letter-spacing="1.06" fill="#8cc43a">U_Photod</text>
<path d="M3 735H7M41.5 735H55" stroke="#f08c28" stroke-width="1.3"/>
<path d="M9.5 722.5H29.5L41.5 735L29.5 747.5H9.5Q7 747.5 7 745V725Q7 722.5 9.5 722.5Z" fill="#1c1108" stroke="#f08c28" stroke-width="1.4"/>
<text x="22" y="739.5" font-size="11.5" fill="#f08c28" text-anchor="middle">M 1</text>
<text x="54" y="740" font-size="17.5" letter-spacing="0.8" fill="#f08c28">B_t</text>
<path d="M3 930H7M42 930H55" stroke="#7a2e96" stroke-width="1.3"/>
<path d="M9.5 917H30L42 930L30 943H9.5Q6 943 6 940V920Q6 917 9.5 917Z" fill="#7a2e96"/>
<text x="23" y="934.5" font-size="11.5" fill="#ffffff" text-anchor="middle">M 2</text>
<text x="52" y="935.4" font-size="17.5" letter-spacing="0.5" fill="#7a2e96">I_p</text>
<path d="M45 58H65L55 68Z" fill="#f7901e"/>
<path d="M46.5 69.5H63.5V88.5H59L55 95L51 88.5H46.5Z" fill="#000" stroke="#f7901e" stroke-width="2.2"/>
<text x="55" y="84" font-size="14.5" font-weight="bold" fill="#f7901e" text-anchor="middle">T</text>
</svg>
<div class="a" style="left:1769px;top:29px;width:151px;height:967px;box-sizing:border-box;border:1px solid #58524c;border-right:none"></div>
<div class="a" style="left:1769px;top:29px;width:151px;height:1px;background:#6b6058"></div>
<svg class="a" style="left:1780px;top:0" width="135" height="30" viewBox="0 0 135 30"><text x="5.5" y="26" font-size="30.5" font-weight="bold" fill="#ffffff" textLength="118" lengthAdjust="spacingAndGlyphs" stroke="#fff" stroke-width="0.7">Tektronix</text><path d="M34.9 26H39.5L50.9 9H46Z" fill="#1ec0e0"/></svg>
<div class="t" style="left:1802px;top:31px;font-size:15px;font-weight:bold;color:#e8e8e8;letter-spacing:0.95px">Add New...</div>
<div class="btn" style="left:1778px;top:54px;width:63px;height:37px;font-size:15px;line-height:33px;">Cursors</div>
<div class="btn" style="left:1850px;top:54px;width:63px;height:37px;font-size:15px;line-height:33px;">Callout</div>
<div class="btn" style="left:1778px;top:100px;width:63px;height:37px;font-size:15px;line-height:33px;">Measure</div>
<div class="btn" style="left:1850px;top:100px;width:63px;height:37px;font-size:15px;line-height:33px;">Search</div>
<div class="btn" style="left:1778px;top:146px;width:63px;height:37px;font-size:15px;line-height:15px;padding-top:2px;">Results<br>Table</div>
<div class="btn" style="left:1850px;top:146px;width:63px;height:37px;font-size:15px;line-height:33px;">Plot</div>
<div class="btn" style="left:1778px;top:196px;width:63px;height:37px;font-size:15px;line-height:33px;"><svg width="40" height="30" viewBox="0 0 40 30" style="vertical-align:middle;margin-top:-3px"><rect x="8" y="4" width="22" height="20" fill="none" stroke="#9a9a9a" stroke-width="2" stroke-dasharray="3 2"/><circle cx="21" cy="12" r="5" fill="none" stroke="#aaa" stroke-width="2"/><path d="M17.5 15.5L12 21" stroke="#aaa" stroke-width="2.5"/><path d="M24 17L33 25L29 25.5L31 30L29 30.5L27 26L24 28Z" fill="#9a9a9a"/></svg></div>
<div class="btn" style="left:1850px;top:196px;width:63px;height:37px;font-size:15px;line-height:33px;">More...</div>
<div class="a" style="left:1773px;top:189px;width:144px;height:1px;background:#5a5550"></div>
<div class="a" style="left:1773px;top:241px;width:144px;height:1px;background:#5a5550"></div>
<div class="a" style="left:1760px;top:501px;width:4px;height:5px;border-radius:2px;background:#b0b0b0"></div>
<div class="a" style="left:1760px;top:510px;width:4px;height:5px;border-radius:2px;background:#b0b0b0"></div>
<div class="a" style="left:1760px;top:518px;width:4px;height:5px;border-radius:2px;background:#b0b0b0"></div>
<div class="box" style="left:3px;top:1003px;width:90px;height:76px;background:#c8c8c8"><div class="h" style="background:#4a4524;border-bottom-color:#a9a9a9"></div><div class="t" style="left:5px;top:1px;font-size:15px;letter-spacing:0.35px;color:#f5ee2e">Ch 1</div><div class="t" style="left:5px;top:20.6px;font-size:15px;color:#111">5 V/div</div><div class="t" style="left:5px;top:39.8px;font-size:15px;color:#111">1 M&Omega;</div><div class="t" style="left:5px;top:59.0px;font-size:15px;color:#111">200 kHz</div><div class="t" style="left:72px;top:58.5px;font-size:9.5px;font-weight:bold;color:#111">B</div><div class="t" style="left:76.5px;top:62px;font-size:9.5px;font-weight:bold;color:#111">w</div></div>
<div class="box" style="left:98px;top:1003px;width:90px;height:76px;background:#8b8b8b"><div class="h" style="background:#2a8083;border-bottom-color:#6e6e6e"></div><div class="t" style="left:5px;top:1px;font-size:15px;letter-spacing:0.35px;color:#1a1a1a">Ch 2</div><div class="t" style="left:5px;top:20.6px;font-size:15px;color:#111">250 mV/div</div><div class="t" style="left:5px;top:39.8px;font-size:15px;color:#111">1 M&Omega;</div><div class="t" style="left:5px;top:59.0px;font-size:15px;color:#111">200 kHz</div><div class="t" style="left:72px;top:58.5px;font-size:9.5px;font-weight:bold;color:#111">B</div><div class="t" style="left:76.5px;top:62px;font-size:9.5px;font-weight:bold;color:#111">w</div></div>
<div class="box" style="left:193px;top:1003px;width:90px;height:76px;background:#8b8b8b"><div class="h" style="background:#8e3a4a;border-bottom-color:#6e6e6e"></div><div class="t" style="left:5px;top:1px;font-size:15px;letter-spacing:0.35px;color:#c8b8bc">Ch 3</div><div class="t" style="left:5px;top:20.6px;font-size:15px;color:#111">450 mV/div</div><div class="t" style="left:5px;top:39.8px;font-size:15px;color:#111">1 M&Omega;</div><div class="t" style="left:5px;top:59.0px;font-size:15px;color:#111">200 kHz</div><div class="t" style="left:72px;top:58.5px;font-size:9.5px;font-weight:bold;color:#111">B</div><div class="t" style="left:76.5px;top:62px;font-size:9.5px;font-weight:bold;color:#111">w</div></div>
<div class="box" style="left:288px;top:1003px;width:90px;height:76px;background:#c8c8c8"><div class="h" style="background:#344226;border-bottom-color:#a9a9a9"></div><div class="t" style="left:5px;top:1px;font-size:15px;letter-spacing:0.35px;color:#8fd82e">Ch 4</div><div class="t" style="left:5px;top:20.6px;font-size:15px;color:#111">200 mV/div</div><div class="t" style="left:5px;top:39.8px;font-size:15px;color:#111">1 M&Omega;</div><div class="t" style="left:5px;top:59.0px;font-size:15px;color:#111">200 kHz</div><div class="t" style="left:72px;top:58.5px;font-size:9.5px;font-weight:bold;color:#111">B</div><div class="t" style="left:76.5px;top:62px;font-size:9.5px;font-weight:bold;color:#111">w</div></div>
<div class="box" style="left:383px;top:1003px;width:90px;height:76px;background:#c8c8c8"><div class="h" style="background:#4a301a;border-bottom-color:#a9a9a9"></div><div class="t" style="left:5px;top:1px;font-size:15px;letter-spacing:0.35px;color:#f5921e">Math 1</div><div class="t" style="left:5px;top:20.6px;font-size:15px;color:#111">73.0 mT/div</div><div class="t" style="left:5px;top:39.8px;font-size:15px;color:#111">Intg(Ch2)...</div></div>
<div class="box" style="left:478px;top:1003px;width:90px;height:76px;background:#c8c8c8"><div class="h" style="background:#6c2a90;border-bottom-color:#a9a9a9"></div><div class="t" style="left:5px;top:1px;font-size:15px;letter-spacing:0.35px;color:#ffffff">Math 2</div><div class="t" style="left:5px;top:20.6px;font-size:15px;color:#111">119.07 A/div</div><div class="t" style="left:5px;top:39.8px;font-size:15px;color:#111">-Intg(Ch3...</div></div>
<div class="btn" style="left:1023px;top:999px;width:40px;height:80px;border-radius:6px;font-size:20px"><div class="a" style="left:4px;top:6.5px;width:31px;height:2px;background:#f7901e"></div><div class="t" style="left:0;right:0;top:34px;line-height:16px;text-align:center">5</div></div>
<div class="btn" style="left:1068px;top:999px;width:40px;height:80px;border-radius:6px;font-size:20px"><div class="a" style="left:4px;top:6.5px;width:31px;height:2px;background:#2828d8"></div><div class="t" style="left:0;right:0;top:34px;line-height:16px;text-align:center">6</div></div>
<div class="btn" style="left:1129px;top:999px;width:40px;height:80px;border-radius:6px;font-size:15px"><div class="a" style="left:4px;top:6.5px;width:31px;height:2px;background:#b02020"></div><div class="t" style="left:0;right:0;top:20px;line-height:16px;text-align:center">Add<br>New<br>Math</div></div>
<div class="btn" style="left:1174px;top:999px;width:40px;height:80px;border-radius:6px;font-size:15px"><div class="a" style="left:4px;top:6.5px;width:31px;height:2px;background:#c8c8d8"></div><div class="t" style="left:0;right:0;top:20px;line-height:16px;text-align:center">Add<br>New<br>Ref</div></div>
<div class="btn" style="left:1219px;top:999px;width:40px;height:80px;border-radius:6px;font-size:15px"><div class="a" style="left:4px;top:6.5px;width:31px;height:2px;background:#c040f0"></div><div class="t" style="left:0;right:0;top:20px;line-height:16px;text-align:center">Add<br>New<br>Bus</div></div>
<div class="a" style="left:1118px;top:1000px;width:1px;height:79px;background:#55504a"></div>
<div class="a" style="left:1269px;top:1000px;width:1px;height:79px;background:#55504a"></div>
<div class="a" style="left:1811px;top:1000px;width:1px;height:79px;background:#55504a"></div>
<div class="box" style="left:1280px;top:1003px;width:199px;height:76px;border:1px solid #3a3a3a"><div class="h" style="background:#58595b;border-bottom-color:#9d9d9d"></div><div class="t" style="left:5px;top:0.5px;font-size:15.5px;color:#f0f0f0">Horizontal</div><div class="t" style="left:4px;top:20px;font-size:15px;color:#111">4.5 ms/div</div><div class="t" style="left:110px;top:20px;font-size:15px;color:#111">45 ms</div><div class="t" style="left:4px;top:39px;font-size:15px;color:#111">SR: 1 MS/s</div><div class="t" style="left:110px;top:39px;font-size:15px;color:#111">1 &mu;s/pt</div><div class="t" style="left:4px;top:58px;font-size:15px;color:#111">RL: 45 kpts</div><svg class="a" style="left:110px;top:60.5px" width="10" height="12"><path d="M1 1H9V8H6.5L5 11L3.5 8H1Z" fill="#000" stroke="#f7901e" stroke-width="1.5"/><text x="5" y="7.5" font-size="7" font-weight="bold" fill="#fff" text-anchor="middle">T</text></svg><div class="t" style="left:124px;top:58px;font-size:15px;color:#111">3%</div></div>
<div class="box" style="left:1485px;top:1003px;width:159px;height:76px;border:1px solid #3a3a3a"><div class="h" style="background:#58595b;border-bottom-color:#9d9d9d"></div><div class="t" style="left:5px;top:0.5px;font-size:15.5px;color:#f0f0f0">Trigger</div><div class="a" style="left:4px;top:20.5px;width:28px;height:14px;border-radius:4px;background:#2222c0;border:1px solid #111;color:#fff;font-size:14px;line-height:14px;text-align:center">6</div><svg class="a" style="left:44px;top:22px" width="18" height="14"><path d="M1 12H4L11 3H16" fill="none" stroke="#3a3a90" stroke-width="1.1"/></svg><div class="t" style="left:70px;top:20px;font-size:15px;color:#111">3 V</div></div>
<div class="box" style="left:1651px;top:1003px;width:148px;height:76px;border:1px solid #3a3a3a"><div class="h" style="background:#58595b;border-bottom-color:#9d9d9d"></div><div class="t" style="left:5px;top:0.5px;font-size:15.5px;color:#f0f0f0">Acquisition</div><div class="t" style="left:4px;top:20px;font-size:15px;color:#111">Manual,</div><div class="t" style="left:84px;top:20px;font-size:15px;color:#111">Analyze</div><div class="t" style="left:4px;top:39px;font-size:15px;color:#111">High Res: 16 bits</div><div class="t" style="left:4px;top:58px;font-size:15px;color:#111">Single: 0 /1</div></div>
<div class="a" style="left:1822px;top:999px;width:90px;height:36px;box-sizing:border-box;border:1px solid #6a6a6a;border-radius:6px;background:#fe1a24;color:#fff;font-weight:bold;font-size:14px;line-height:32px;text-align:center">Preview</div>
<div class="a" style="left:1822px;top:1040px;width:90px;height:39px;box-sizing:border-box;border:1px solid #555;border-radius:5px;background:#c8c8c8;color:#111;font-size:15px;line-height:16.5px;text-align:center;padding-top:0.5px">28 May 2025<br>5:09:13 PM</div>
</body></html>
